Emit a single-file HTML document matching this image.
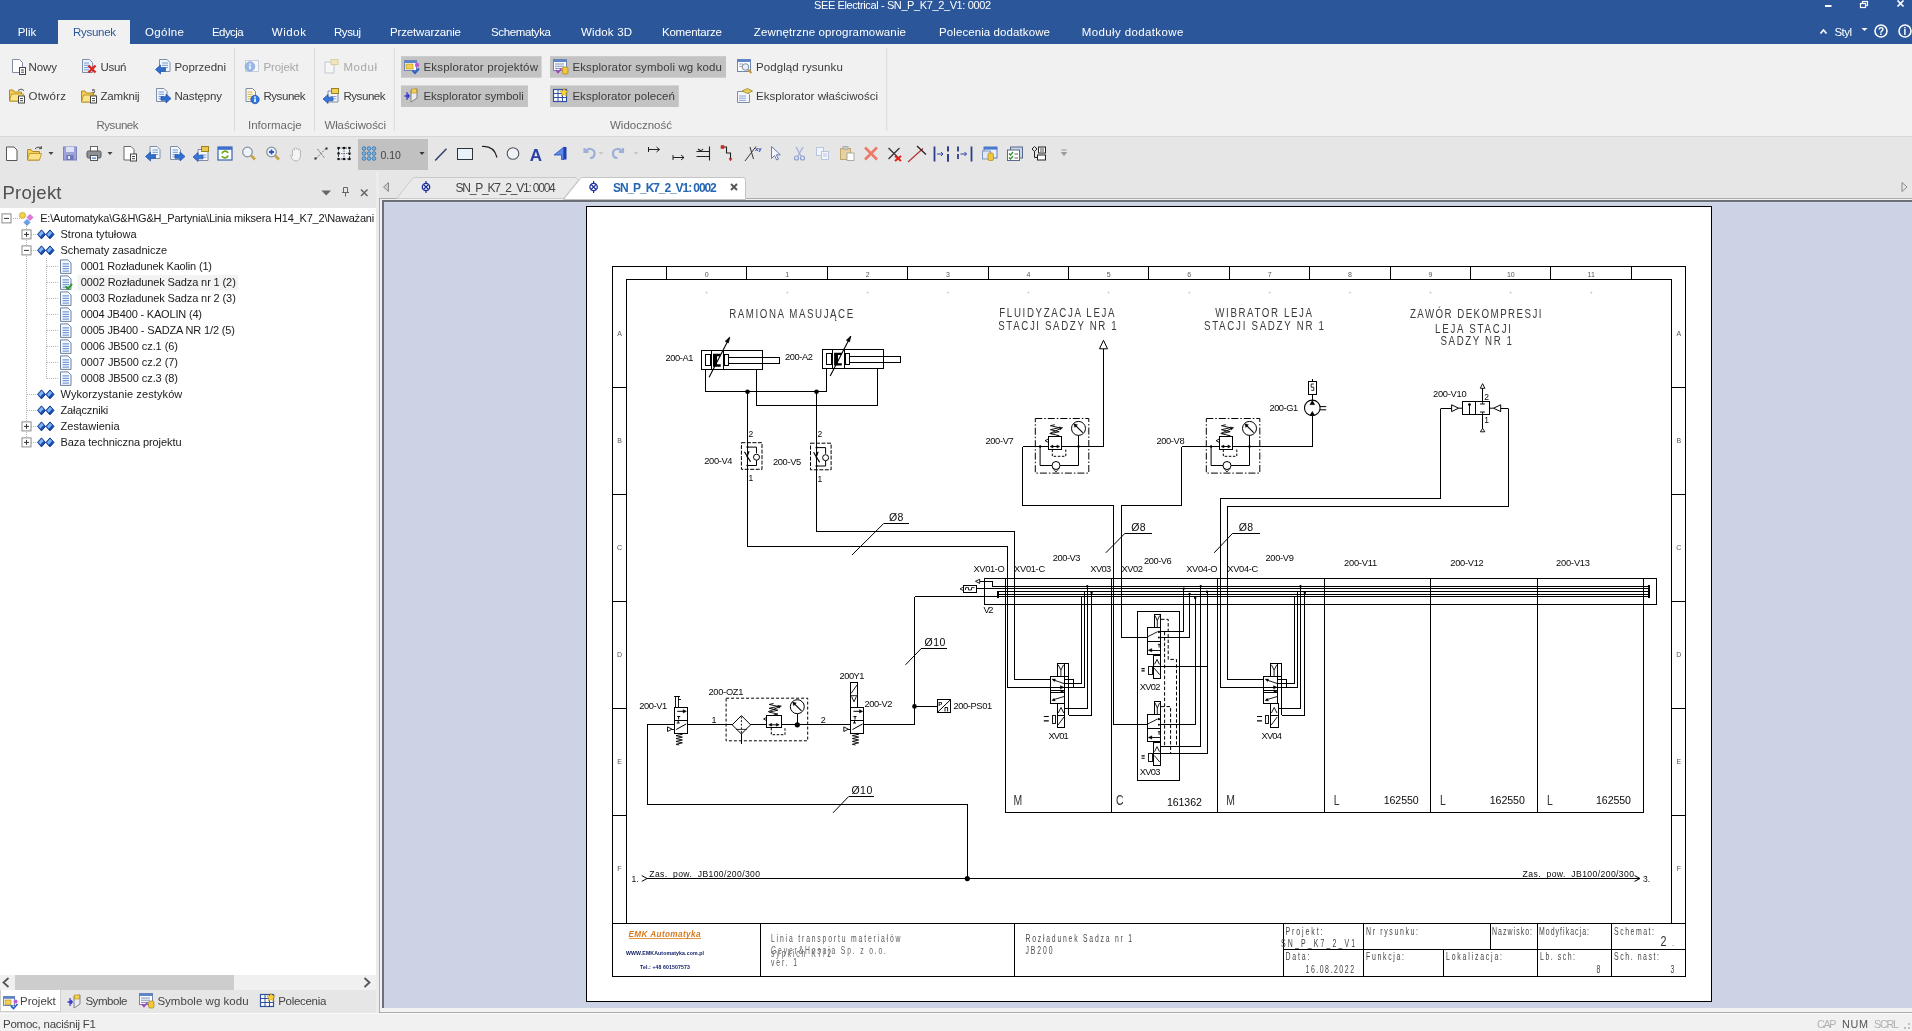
<!DOCTYPE html>
<html lang="pl"><head><meta charset="utf-8"><title>SEE Electrical - SN_P_K7_2_V1: 0002</title>
<style>
html,body{margin:0;padding:0;}
body{width:1912px;height:1031px;overflow:hidden;position:relative;background:#f0f0f0;font-family:"Liberation Sans",sans-serif;}
div{position:absolute;box-sizing:border-box;}
#titlebar{left:0;top:0;width:1912px;height:44px;background:#2B579A;}
#tab-active{left:58px;top:20px;width:72px;height:25px;background:#f1f1f1;}
#ribbon{left:0;top:44px;width:1912px;height:93px;background:#f1f1f1;border-bottom:1px solid #d8d8d8;}
#toolbar{left:0;top:137px;width:1912px;height:75px;background:#e6e6e6;}
#gridcombo{left:358px;top:139px;width:70px;height:31px;background:#c1c1c1;}
#panel{left:0;top:208px;width:376px;height:767px;background:#ffffff;}
#hscroll{left:0;top:975px;width:376px;height:15px;background:#f0f0f0;}
#hthumb{left:15px;top:975px;width:219px;height:15px;background:#cdcdcd;}
#ptabs{left:0;top:990px;width:376px;height:23px;background:#e6e6e6;}
#ptab-active{left:0;top:990px;width:61px;height:22px;background:#ffffff;border:1px solid #d0d0d0;border-top:none;}
#splitter{left:376px;top:172px;width:3px;height:841px;background:#ececec;}
#docouter{left:379px;top:198px;width:1533px;height:815px;background:#f2f2f2;border-top:1px solid #ababab;border-left:1px solid #ababab;border-bottom:1px solid #ababab;}
#docdark{left:382px;top:200px;width:1530px;height:808px;background:#6b7079;}
#docarea{left:384px;top:202px;width:1528px;height:806px;background:#ccd3e4;border-top:1px solid #d4d9e8;}
#paper{left:586px;top:206px;width:1126px;height:796px;background:#ffffff;border:1px solid #000;}
#status{left:0;top:1013px;width:1912px;height:18px;background:#f1f1f1;border-top:1px solid #fafafa;}
svg{position:absolute;left:0;top:0;will-change:transform;}
text{font-family:"Liberation Sans",sans-serif;white-space:pre;}
</style></head><body>
<div id="titlebar"></div><div id="tab-active"></div>
<div id="ribbon"></div>
<div id="toolbar"></div><div id="gridcombo"></div>
<div id="panel"></div><div id="hscroll"></div><div id="hthumb"></div><div id="ptabs"></div><div id="ptab-active"></div>
<div id="splitter"></div>
<div id="docouter"></div><div id="docdark"></div><div id="docarea"></div>
<div id="paper"></div>
<div id="status"></div>
<svg id="schematic" width="1912" height="1031" viewBox="0 0 1912 1031">
<g shape-rendering="crispEdges">
<rect x="612.5" y="266.5" width="1073" height="710" fill="none" stroke="#000" stroke-width="1"  shape-rendering="crispEdges"/>
<path d="M626.5 923.5 L626.5 279.5 L1671.5 279.5 L1671.5 923.5" stroke="#000" stroke-width="1" fill="none" />
<line x1="612.5" y1="923.5" x2="1685.5" y2="923.5" stroke="#000" stroke-width="1"  shape-rendering="crispEdges"/>
<line x1="666.5" y1="266.5" x2="666.5" y2="279.5" stroke="#000" stroke-width="1"  shape-rendering="crispEdges"/>
<line x1="746.5" y1="266.5" x2="746.5" y2="279.5" stroke="#000" stroke-width="1"  shape-rendering="crispEdges"/>
<line x1="827.5" y1="266.5" x2="827.5" y2="279.5" stroke="#000" stroke-width="1"  shape-rendering="crispEdges"/>
<line x1="907.5" y1="266.5" x2="907.5" y2="279.5" stroke="#000" stroke-width="1"  shape-rendering="crispEdges"/>
<line x1="988.5" y1="266.5" x2="988.5" y2="279.5" stroke="#000" stroke-width="1"  shape-rendering="crispEdges"/>
<line x1="1068.5" y1="266.5" x2="1068.5" y2="279.5" stroke="#000" stroke-width="1"  shape-rendering="crispEdges"/>
<line x1="1148.5" y1="266.5" x2="1148.5" y2="279.5" stroke="#000" stroke-width="1"  shape-rendering="crispEdges"/>
<line x1="1229.5" y1="266.5" x2="1229.5" y2="279.5" stroke="#000" stroke-width="1"  shape-rendering="crispEdges"/>
<line x1="1309.5" y1="266.5" x2="1309.5" y2="279.5" stroke="#000" stroke-width="1"  shape-rendering="crispEdges"/>
<line x1="1390.5" y1="266.5" x2="1390.5" y2="279.5" stroke="#000" stroke-width="1"  shape-rendering="crispEdges"/>
<line x1="1470.5" y1="266.5" x2="1470.5" y2="279.5" stroke="#000" stroke-width="1"  shape-rendering="crispEdges"/>
<line x1="1550.5" y1="266.5" x2="1550.5" y2="279.5" stroke="#000" stroke-width="1"  shape-rendering="crispEdges"/>
<line x1="1631.5" y1="266.5" x2="1631.5" y2="279.5" stroke="#000" stroke-width="1"  shape-rendering="crispEdges"/>
<line x1="612.5" y1="387.5" x2="626.5" y2="387.5" stroke="#000" stroke-width="1"  shape-rendering="crispEdges"/>
<line x1="1671.5" y1="387.5" x2="1685.5" y2="387.5" stroke="#000" stroke-width="1"  shape-rendering="crispEdges"/>
<line x1="612.5" y1="494.5" x2="626.5" y2="494.5" stroke="#000" stroke-width="1"  shape-rendering="crispEdges"/>
<line x1="1671.5" y1="494.5" x2="1685.5" y2="494.5" stroke="#000" stroke-width="1"  shape-rendering="crispEdges"/>
<line x1="612.5" y1="601.5" x2="626.5" y2="601.5" stroke="#000" stroke-width="1"  shape-rendering="crispEdges"/>
<line x1="1671.5" y1="601.5" x2="1685.5" y2="601.5" stroke="#000" stroke-width="1"  shape-rendering="crispEdges"/>
<line x1="612.5" y1="708.5" x2="626.5" y2="708.5" stroke="#000" stroke-width="1"  shape-rendering="crispEdges"/>
<line x1="1671.5" y1="708.5" x2="1685.5" y2="708.5" stroke="#000" stroke-width="1"  shape-rendering="crispEdges"/>
<line x1="612.5" y1="815.5" x2="626.5" y2="815.5" stroke="#000" stroke-width="1"  shape-rendering="crispEdges"/>
<line x1="1671.5" y1="815.5" x2="1685.5" y2="815.5" stroke="#000" stroke-width="1"  shape-rendering="crispEdges"/>
<line x1="760.5" y1="923.5" x2="760.5" y2="976.5" stroke="#000" stroke-width="1"  shape-rendering="crispEdges"/>
<line x1="1014.5" y1="923.5" x2="1014.5" y2="976.5" stroke="#000" stroke-width="1"  shape-rendering="crispEdges"/>
<line x1="1283.5" y1="923.5" x2="1283.5" y2="976.5" stroke="#000" stroke-width="1"  shape-rendering="crispEdges"/>
<line x1="1363.5" y1="923.5" x2="1363.5" y2="976.5" stroke="#000" stroke-width="1"  shape-rendering="crispEdges"/>
<line x1="1537.5" y1="923.5" x2="1537.5" y2="976.5" stroke="#000" stroke-width="1"  shape-rendering="crispEdges"/>
<line x1="1611.5" y1="923.5" x2="1611.5" y2="976.5" stroke="#000" stroke-width="1"  shape-rendering="crispEdges"/>
<line x1="1490.5" y1="923.5" x2="1490.5" y2="949.5" stroke="#000" stroke-width="1"  shape-rendering="crispEdges"/>
<line x1="1443.5" y1="949.5" x2="1443.5" y2="976.5" stroke="#000" stroke-width="1"  shape-rendering="crispEdges"/>
<line x1="1283.5" y1="949.5" x2="1685.5" y2="949.5" stroke="#000" stroke-width="1"  shape-rendering="crispEdges"/>
</g>
<text x="706.8" y="276.5" font-size="7" fill="#555" text-anchor="middle" >0</text>
<text x="706.8" y="294" font-size="5" fill="#bbb" text-anchor="middle" >+</text>
<text x="787.2" y="276.5" font-size="7" fill="#555" text-anchor="middle" >1</text>
<text x="787.2" y="294" font-size="5" fill="#bbb" text-anchor="middle" >+</text>
<text x="867.6" y="276.5" font-size="7" fill="#555" text-anchor="middle" >2</text>
<text x="867.6" y="294" font-size="5" fill="#bbb" text-anchor="middle" >+</text>
<text x="948" y="276.5" font-size="7" fill="#555" text-anchor="middle" >3</text>
<text x="948" y="294" font-size="5" fill="#bbb" text-anchor="middle" >+</text>
<text x="1028.4" y="276.5" font-size="7" fill="#555" text-anchor="middle" >4</text>
<text x="1028.4" y="294" font-size="5" fill="#bbb" text-anchor="middle" >+</text>
<text x="1108.8" y="276.5" font-size="7" fill="#555" text-anchor="middle" >5</text>
<text x="1108.8" y="294" font-size="5" fill="#bbb" text-anchor="middle" >+</text>
<text x="1189.2" y="276.5" font-size="7" fill="#555" text-anchor="middle" >6</text>
<text x="1189.2" y="294" font-size="5" fill="#bbb" text-anchor="middle" >+</text>
<text x="1269.6" y="276.5" font-size="7" fill="#555" text-anchor="middle" >7</text>
<text x="1269.6" y="294" font-size="5" fill="#bbb" text-anchor="middle" >+</text>
<text x="1350" y="276.5" font-size="7" fill="#555" text-anchor="middle" >8</text>
<text x="1350" y="294" font-size="5" fill="#bbb" text-anchor="middle" >+</text>
<text x="1430.4" y="276.5" font-size="7" fill="#555" text-anchor="middle" >9</text>
<text x="1430.4" y="294" font-size="5" fill="#bbb" text-anchor="middle" >+</text>
<text x="1510.8" y="276.5" font-size="7" fill="#555" text-anchor="middle" >10</text>
<text x="1510.8" y="294" font-size="5" fill="#bbb" text-anchor="middle" >+</text>
<text x="1591.2" y="276.5" font-size="7" fill="#555" text-anchor="middle" >11</text>
<text x="1591.2" y="294" font-size="5" fill="#bbb" text-anchor="middle" >+</text>
<text x="619.5" y="335.8" font-size="7" fill="#555" text-anchor="middle" >A</text>
<text x="1678.8" y="335.8" font-size="7" fill="#555" text-anchor="middle" >A</text>
<text x="619.5" y="442.8" font-size="7" fill="#555" text-anchor="middle" >B</text>
<text x="1678.8" y="442.8" font-size="7" fill="#555" text-anchor="middle" >B</text>
<text x="619.5" y="549.8" font-size="7" fill="#555" text-anchor="middle" >C</text>
<text x="1678.8" y="549.8" font-size="7" fill="#555" text-anchor="middle" >C</text>
<text x="619.5" y="656.8" font-size="7" fill="#555" text-anchor="middle" >D</text>
<text x="1678.8" y="656.8" font-size="7" fill="#555" text-anchor="middle" >D</text>
<text x="619.5" y="763.8" font-size="7" fill="#555" text-anchor="middle" >E</text>
<text x="1678.8" y="763.8" font-size="7" fill="#555" text-anchor="middle" >E</text>
<text x="619.5" y="870.8" font-size="7" fill="#555" text-anchor="middle" >F</text>
<text x="1678.8" y="870.8" font-size="7" fill="#555" text-anchor="middle" >F</text>
<text transform="translate(1285.5 934.8) scale(0.62 1)" font-size="11.2" fill="#444" textLength="59.68" lengthAdjust="spacing" >Projekt:</text>
<text transform="translate(1281 946.5) scale(0.62 1)" font-size="11.2" fill="#444" textLength="119.35" lengthAdjust="spacing" >SN_P_K7_2_V1</text>
<text transform="translate(1285.5 960.3) scale(0.62 1)" font-size="11.2" fill="#444" textLength="38.71" lengthAdjust="spacing" >Data:</text>
<text transform="translate(1305.5 973.2) scale(0.62 1)" font-size="11.2" fill="#444" textLength="78.23" lengthAdjust="spacing" >16.08.2022</text>
<text transform="translate(1366 934.8) scale(0.62 1)" font-size="11.2" fill="#444" textLength="83.87" lengthAdjust="spacing" >Nr rysunku:</text>
<text transform="translate(1492 934.8) scale(0.62 1)" font-size="11.2" fill="#444" textLength="64.52" lengthAdjust="spacing" >Nazwisko:</text>
<text transform="translate(1539 934.8) scale(0.62 1)" font-size="11.2" fill="#444" textLength="80.65" lengthAdjust="spacing" >Modyfikacja:</text>
<text transform="translate(1614 934.8) scale(0.62 1)" font-size="11.2" fill="#444" textLength="64.52" lengthAdjust="spacing" >Schemat:</text>
<text transform="translate(1660.5 945.5) scale(0.72 1)" font-size="15" fill="#333" textLength="11.81" lengthAdjust="spacing" >2</text>
<text x="1672" y="946" font-size="8" fill="#3a3a3a" >.</text>
<text transform="translate(1366 960.3) scale(0.62 1)" font-size="11.2" fill="#444" textLength="61.29" lengthAdjust="spacing" >Funkcja:</text>
<text transform="translate(1446 960.3) scale(0.62 1)" font-size="11.2" fill="#444" textLength="90.32" lengthAdjust="spacing" >Lokalizacja:</text>
<text transform="translate(1540 960.3) scale(0.62 1)" font-size="11.2" fill="#444" textLength="56.45" lengthAdjust="spacing" >Lb. sch:</text>
<text transform="translate(1596.5 973.2) scale(0.62 1)" font-size="11.2" fill="#444" textLength="7.26" lengthAdjust="spacing" >8</text>
<text transform="translate(1614 960.3) scale(0.62 1)" font-size="11.2" fill="#444" textLength="72.58" lengthAdjust="spacing" >Sch. nast:</text>
<text transform="translate(1670.5 973.2) scale(0.62 1)" font-size="11.2" fill="#444" textLength="7.26" lengthAdjust="spacing" >3</text>
<text transform="translate(1025.5 942) scale(0.68 1)" font-size="10" fill="#4a4a4a" textLength="156.62" lengthAdjust="spacing" >Rozładunek Sadza nr 1</text>
<text transform="translate(1025.5 953.5) scale(0.68 1)" font-size="10" fill="#4a4a4a" textLength="39.71" lengthAdjust="spacing" >JB200</text>
<text transform="translate(771 942) scale(0.68 1)" font-size="10" fill="#555" textLength="190.44" lengthAdjust="spacing" >Linia transportu materiałów</text>
<text transform="translate(771 953.5) scale(0.68 1)" font-size="10" fill="#666" textLength="169.12" lengthAdjust="spacing" >Geyer&amp;Hosaja Sp. z o.o.</text>
<text transform="translate(771 957) scale(0.68 1)" font-size="10" fill="#666" textLength="88.24" lengthAdjust="spacing" >sypkich K7/2</text>
<text transform="translate(771 965.6) scale(0.68 1)" font-size="10" fill="#555" textLength="38.24" lengthAdjust="spacing" >ver. 1</text>
<text x="628.5" y="937" font-size="8.2" fill="#d87a1c" font-weight="bold" font-style="italic" textLength="72" lengthAdjust="spacing" >EMK Automatyka</text>
<line x1="628.5" y1="938.5" x2="701" y2="938.5" stroke="#d87a1c" stroke-width="0.8"  shape-rendering="crispEdges"/>
<text x="626" y="954.5" font-size="5.2" fill="#10206a" font-weight="bold" textLength="78" lengthAdjust="spacing" >WWW.EMKAutomatyka.com.pl</text>
<text x="640" y="968.5" font-size="5.2" fill="#10206a" font-weight="bold" textLength="50" lengthAdjust="spacing" >Tel.: +48 601507573</text>
<text transform="translate(729.2 317.6) scale(0.72 1)" font-size="13.5" fill="#3a3a3a" textLength="172.22" lengthAdjust="spacing" >RAMIONA MASUJĄCE</text>
<text transform="translate(999.3 316.9) scale(0.72 1)" font-size="13.5" fill="#3a3a3a" textLength="160" lengthAdjust="spacing" >FLUIDYZACJA LEJA</text>
<text transform="translate(998.2 330) scale(0.72 1)" font-size="13.5" fill="#3a3a3a" textLength="164.58" lengthAdjust="spacing" >STACJI SADZY NR 1</text>
<text transform="translate(1215.3 316.9) scale(0.72 1)" font-size="13.5" fill="#3a3a3a" textLength="134.31" lengthAdjust="spacing" >WIBRATOR LEJA</text>
<text transform="translate(1204 330) scale(0.72 1)" font-size="13.5" fill="#3a3a3a" textLength="166.67" lengthAdjust="spacing" >STACJI SADZY NR 1</text>
<text transform="translate(1409.9 318.4) scale(0.72 1)" font-size="13.5" fill="#3a3a3a" textLength="182.78" lengthAdjust="spacing" >ZAWÓR DEKOMPRESJI</text>
<text transform="translate(1435 332.6) scale(0.72 1)" font-size="13.5" fill="#3a3a3a" textLength="105.56" lengthAdjust="spacing" >LEJA STACJI</text>
<text transform="translate(1440.5 345.2) scale(0.72 1)" font-size="13.5" fill="#3a3a3a" textLength="99.31" lengthAdjust="spacing" >SADZY NR 1</text>
<rect x="701.5" y="350.4" width="61.2" height="18.8" fill="none" stroke="#000" stroke-width="1"  shape-rendering="crispEdges"/>
<rect x="728.8" y="357.2" width="50.8" height="6.4" fill="none" stroke="#000" stroke-width="1"  shape-rendering="crispEdges"/>
<rect x="705.4" y="354.3" width="4.8" height="11.3" fill="none" stroke="#000" stroke-width="1"  shape-rendering="crispEdges"/>
<line x1="711.3" y1="350.4" x2="711.3" y2="369.2" stroke="#000" stroke-width="1"  shape-rendering="crispEdges"/>
<line x1="723.3" y1="350.4" x2="723.3" y2="369.2" stroke="#000" stroke-width="1"  shape-rendering="crispEdges"/>
<rect x="724.4" y="354.3" width="4.4" height="11.3" fill="#fff" stroke="#000" stroke-width="1"  shape-rendering="crispEdges"/>
<path d="M720.7 355 h-6.5 v10.5 h6.5" stroke="#000" stroke-width="2.4" fill="none" />
<line x1="715" y1="355" x2="715" y2="365.5" stroke="#000" stroke-width="3"  shape-rendering="crispEdges"/>
<line x1="709.1" y1="377.2" x2="729.6" y2="337.4" stroke="#000" stroke-width="1.1" />
<path d="M729.8 337.1 l-4.6 4.2 l3.2 1.7 z" stroke="#000" stroke-width="0.6" fill="#000" />
<text x="665.5" y="360.8" font-size="9.3" fill="#0a0a0a" textLength="28" lengthAdjust="spacing" >200-A1</text>
<rect x="822.6" y="349.3" width="61.2" height="18.8" fill="none" stroke="#000" stroke-width="1"  shape-rendering="crispEdges"/>
<rect x="849.9" y="356.1" width="50.8" height="6.4" fill="none" stroke="#000" stroke-width="1"  shape-rendering="crispEdges"/>
<rect x="826.5" y="353.2" width="4.8" height="11.3" fill="none" stroke="#000" stroke-width="1"  shape-rendering="crispEdges"/>
<line x1="832.4" y1="349.3" x2="832.4" y2="368.1" stroke="#000" stroke-width="1"  shape-rendering="crispEdges"/>
<line x1="844.4" y1="349.3" x2="844.4" y2="368.1" stroke="#000" stroke-width="1"  shape-rendering="crispEdges"/>
<rect x="845.5" y="353.2" width="4.4" height="11.3" fill="#fff" stroke="#000" stroke-width="1"  shape-rendering="crispEdges"/>
<path d="M841.8 353.9 h-6.5 v10.5 h6.5" stroke="#000" stroke-width="2.4" fill="none" />
<line x1="836.1" y1="353.9" x2="836.1" y2="364.4" stroke="#000" stroke-width="3"  shape-rendering="crispEdges"/>
<line x1="830.2" y1="376.1" x2="850.7" y2="336.3" stroke="#000" stroke-width="1.1" />
<path d="M850.9 336 l-4.6 4.2 l3.2 1.7 z" stroke="#000" stroke-width="0.6" fill="#000" />
<text x="785" y="359.7" font-size="9.3" fill="#0a0a0a" textLength="28" lengthAdjust="spacing" >200-A2</text>
<path d="M705.5 369.2 V391.5 H826.5 V368.1 M756.5 369.2 V405.5 H877.8 V368.1 M747.5 391.5 V546.5 H1007.5 V687.5 H1062.5 M816.5 391.5 V531.5 H1014.5 V679.5 H1050.5" stroke="#000" stroke-width="1" fill="none" shape-rendering="crispEdges"/>
<circle cx="747.5" cy="391.8" r="2.3" fill="#000" />
<circle cx="816.5" cy="391.8" r="2.3" fill="#000" />
<rect x="741.4" y="442.7" width="20.6" height="26.6" fill="none" stroke="#000" stroke-width="1" stroke-dasharray="4 1.5"/>
<path d="M747.5 447.1 h9 v6.2 M756.5 459.3 v6.2 h-9" stroke="#000" stroke-width="1" fill="none" />
<circle cx="756.5" cy="457.2" r="3" fill="#fff" stroke="#000" stroke-width="1" />
<path d="M744.5 451.7 l6 10 M749 451.2 l-2.2 6" stroke="#000" stroke-width="1.2" fill="none" />
<circle cx="747.5" cy="447.1" r="1.1" fill="#000" />
<circle cx="747.5" cy="465.5" r="1.1" fill="#000" />
<text x="748.5" y="436.7" font-size="8.5" fill="#0a0a0a" >2</text>
<text x="748.5" y="481.2" font-size="8.5" fill="#0a0a0a" >1</text>
<text x="704.3" y="464.2" font-size="9.3" fill="#0a0a0a" textLength="28.2" lengthAdjust="spacing" >200-V4</text>
<rect x="810.5" y="443.2" width="20.6" height="26.6" fill="none" stroke="#000" stroke-width="1" stroke-dasharray="4 1.5"/>
<path d="M816.6 447.6 h9 v6.2 M825.6 459.8 v6.2 h-9" stroke="#000" stroke-width="1" fill="none" />
<circle cx="825.6" cy="457.7" r="3" fill="#fff" stroke="#000" stroke-width="1" />
<path d="M813.6 452.2 l6 10 M818.1 451.7 l-2.2 6" stroke="#000" stroke-width="1.2" fill="none" />
<circle cx="816.6" cy="447.6" r="1.1" fill="#000" />
<circle cx="816.6" cy="466" r="1.1" fill="#000" />
<text x="817.6" y="437.2" font-size="8.5" fill="#0a0a0a" >2</text>
<text x="817.6" y="481.7" font-size="8.5" fill="#0a0a0a" >1</text>
<text x="773" y="464.7" font-size="9.3" fill="#0a0a0a" textLength="28.2" lengthAdjust="spacing" >200-V5</text>
<text x="889" y="521.3" font-size="10.5" fill="#0a0a0a" textLength="14.3" lengthAdjust="spacing" >Ø8</text>
<line x1="883.7" y1="523.5" x2="908.8" y2="523.5" stroke="#000" stroke-width="1"  shape-rendering="crispEdges"/>
<line x1="883.7" y1="523.5" x2="852" y2="555" stroke="#000" stroke-width="1" />
<text x="1131.3" y="530.9" font-size="10.5" fill="#0a0a0a" textLength="14.3" lengthAdjust="spacing" >Ø8</text>
<line x1="1125.2" y1="533.1" x2="1151.5" y2="533.1" stroke="#000" stroke-width="1"  shape-rendering="crispEdges"/>
<line x1="1125.2" y1="533.1" x2="1105.8" y2="552.8" stroke="#000" stroke-width="1" />
<text x="1238.7" y="530.9" font-size="10.5" fill="#0a0a0a" textLength="14.3" lengthAdjust="spacing" >Ø8</text>
<line x1="1232.8" y1="533.1" x2="1259.6" y2="533.1" stroke="#000" stroke-width="1"  shape-rendering="crispEdges"/>
<line x1="1232.8" y1="533.1" x2="1214.2" y2="552.8" stroke="#000" stroke-width="1" />
<text x="924.5" y="646.2" font-size="10.5" fill="#0a0a0a" textLength="20.9" lengthAdjust="spacing" >Ø10</text>
<line x1="921.4" y1="648.4" x2="947" y2="648.4" stroke="#000" stroke-width="1"  shape-rendering="crispEdges"/>
<line x1="921.4" y1="648.4" x2="905.5" y2="664.8" stroke="#000" stroke-width="1" />
<text x="851.4" y="794.2" font-size="10.5" fill="#0a0a0a" textLength="20.9" lengthAdjust="spacing" >Ø10</text>
<line x1="848.8" y1="796.4" x2="873.9" y2="796.4" stroke="#000" stroke-width="1"  shape-rendering="crispEdges"/>
<line x1="848.8" y1="796.4" x2="833" y2="812.8" stroke="#000" stroke-width="1" />
<path d="M914.5 596.5 H984 M914.5 596.5 V724.5 H647.5 V804.5 H967.5 V878.5 M914.5 706.5 H937 M647 878.5 H1640" stroke="#000" stroke-width="1" fill="none" shape-rendering="crispEdges"/>
<circle cx="914.5" cy="706.4" r="2.3" fill="#000" />
<circle cx="967.3" cy="878.6" r="2.6" fill="#000" />
<text x="631.5" y="881.5" font-size="8.5" fill="#0a0a0a" >1.</text>
<path d="M641.8 875.6 L647 878.5 L641.8 881.4" stroke="#000" stroke-width="1" fill="none" />
<text x="649.3" y="877" font-size="8.6" fill="#0a0a0a" textLength="110.7" lengthAdjust="spacing" >Zas.  pow.  JB100/200/300</text>
<text x="1522.6" y="877" font-size="8.6" fill="#0a0a0a" textLength="111.4" lengthAdjust="spacing" >Zas.  pow.  JB100/200/300</text>
<path d="M1634.5 875.6 L1640 878.5 L1634.5 881.4" stroke="#000" stroke-width="1" fill="none" />
<text x="1643" y="882" font-size="8.5" fill="#0a0a0a" >3.</text>
<text x="639.3" y="709" font-size="9.3" fill="#0a0a0a" textLength="27.9" lengthAdjust="spacing" >200-V1</text>
<rect x="675.2" y="696" width="3" height="11" fill="#fff" stroke="#000" stroke-width="0.9"  shape-rendering="crispEdges"/>
<line x1="673.8" y1="696" x2="679.8" y2="696" stroke="#000" stroke-width="0.9"  shape-rendering="crispEdges"/>
<line x1="678.2" y1="699.5" x2="681" y2="699.5" stroke="#000" stroke-width="0.9"  shape-rendering="crispEdges"/>
<rect x="674.2" y="707" width="13.4" height="26.1" fill="#fff" stroke="#000" stroke-width="1"  shape-rendering="crispEdges"/>
<line x1="674.2" y1="720" x2="687.6" y2="720" stroke="#000" stroke-width="1"  shape-rendering="crispEdges"/>
<path d="M677.2 711.3 h7.5" stroke="#000" stroke-width="1" fill="none" />
<path d="M686.4 711.3 l-3.2 -1.6 v3.2 z" stroke="#000" stroke-width="0.5" fill="#000" />
<path d="M678.7 716.5 v3 M677.2 716.5 h3" stroke="#000" stroke-width="1" fill="none" />
<path d="M676.2 729.5 L686.2 724" stroke="#000" stroke-width="1" fill="none" />
<path d="M676.7 723 h3 M678.2 723 v-3" stroke="#000" stroke-width="1" fill="none" />
<path d="M679.2 733.5 L682.4 734.22 L676 735.66 L682.4 737.09 L676 738.53 L682.4 739.97 L676 741.41 L682.4 742.84 L676 744.28 L679.2 745" stroke="#000" stroke-width="0.9" fill="none" />
<path d="M672 729.2 l-4.5 -2.3 v4.6 z" stroke="#000" stroke-width="0.9" fill="#fff" />
<line x1="672" y1="729.2" x2="674.2" y2="729.2" stroke="#000" stroke-width="0.9"  shape-rendering="crispEdges"/>
<text x="711.5" y="723" font-size="9" fill="#0a0a0a" >1</text>
<text x="820.8" y="723" font-size="9" fill="#0a0a0a" >2</text>
<text x="708.5" y="695" font-size="9.3" fill="#0a0a0a" textLength="34.9" lengthAdjust="spacing" >200-OZ1</text>
<rect x="726.1" y="698.2" width="81.6" height="42.6" fill="none" stroke="#000" stroke-width="1" stroke-dasharray="3 2"/>
<path d="M741.4 715.6 l9.2 9.2 l-9.2 9.2 l-9.2 -9.2 z" stroke="#000" stroke-width="1" fill="#fff" />
<path d="M741.4 716.5 v17" stroke="#000" stroke-width="0.9" stroke-dasharray="2 1.6" fill="none"/>
<path d="M736 729.4 h10.8" stroke="#000" stroke-width="0.8" fill="none" />
<line x1="741.4" y1="734" x2="741.4" y2="743.6" stroke="#000" stroke-width="1"  shape-rendering="crispEdges"/>
<line x1="750.6" y1="724.8" x2="766.9" y2="724.8" stroke="#000" stroke-width="1"  shape-rendering="crispEdges"/>
<rect x="766.9" y="715" width="14.2" height="12.8" fill="#fff" stroke="#000" stroke-width="1"  shape-rendering="crispEdges"/>
<path d="M769.4 724.8 h9" stroke="#000" stroke-width="1" fill="none" />
<path d="M768.7 724.8 l3 -1.5 v3 z M779.3 724.8 l-3 -1.5 v3 z" stroke="#000" stroke-width="0.4" fill="#000" />
<path d="M766.9 717.2 l-3.3 1.8 l3.3 1.8" stroke="#000" stroke-width="0.9" fill="none" />
<path d="M773.5 715 L777.9 714.04 L769.1 712.12 L777.9 710.21 L769.1 708.29 L777.9 706.38 L769.1 704.46 L773.5 703.5" stroke="#000" stroke-width="0.9" fill="none" />
<line x1="768.1" y1="711.8" x2="779.7" y2="706.7" stroke="#000" stroke-width="0.9" />
<path d="M781.5 705.9 l-3.8 -0.6 l1.2 3 z" stroke="#000" stroke-width="0.4" fill="#000" />
<path d="M771.3 727.8 v6.9 h13.7 v-6.9" fill="none" stroke="#000" stroke-width="1" stroke-dasharray="2.5 1.6"/>
<circle cx="797.3" cy="706.7" r="7" fill="#fff" stroke="#000" stroke-width="1" />
<line x1="801.5" y1="710.9" x2="793.7" y2="703.1" stroke="#000" stroke-width="1.1" />
<path d="M792.7 702.1 l3.6 0.9 l-2.7 2.7 z" stroke="#000" stroke-width="0.4" fill="#000" />
<line x1="797.3" y1="713.7" x2="797.3" y2="724.8" stroke="#000" stroke-width="1"  shape-rendering="crispEdges"/>
<circle cx="797.3" cy="724.8" r="2.6" fill="#000" />
<text x="839.6" y="679.2" font-size="9.3" fill="#0a0a0a" textLength="24.9" lengthAdjust="spacing" >200Y1</text>
<rect x="850.5" y="682.5" width="7" height="24.5" fill="#fff" stroke="#000" stroke-width="1"  shape-rendering="crispEdges"/>
<path d="M851 693.5 L857 685 M850.5 695.7 H857.5 M851.6 696.4 l2.4 5.4 l2.4 -5.4" stroke="#000" stroke-width="0.9" fill="none" />
<rect x="850.5" y="707" width="13.4" height="26.1" fill="#fff" stroke="#000" stroke-width="1"  shape-rendering="crispEdges"/>
<line x1="850.5" y1="720" x2="863.9" y2="720" stroke="#000" stroke-width="1"  shape-rendering="crispEdges"/>
<path d="M853.5 711.3 h7.5" stroke="#000" stroke-width="1" fill="none" />
<path d="M862.7 711.3 l-3.2 -1.6 v3.2 z" stroke="#000" stroke-width="0.5" fill="#000" />
<path d="M855 716.5 v3 M853.5 716.5 h3" stroke="#000" stroke-width="1" fill="none" />
<path d="M852.5 729.5 L862.5 724" stroke="#000" stroke-width="1" fill="none" />
<path d="M853 723 h3 M854.5 723 v-3" stroke="#000" stroke-width="1" fill="none" />
<path d="M855.5 733.5 L858.7 734.22 L852.3 735.66 L858.7 737.09 L852.3 738.53 L858.7 739.97 L852.3 741.41 L858.7 742.84 L852.3 744.28 L855.5 745" stroke="#000" stroke-width="0.9" fill="none" />
<path d="M848.3 729.2 l-4.5 -2.3 v4.6 z" stroke="#000" stroke-width="0.9" fill="#fff" />
<line x1="848.3" y1="729.2" x2="850.5" y2="729.2" stroke="#000" stroke-width="0.9"  shape-rendering="crispEdges"/>
<text x="864.5" y="707" font-size="9.3" fill="#0a0a0a" textLength="27.9" lengthAdjust="spacing" >200-V2</text>
<rect x="937.2" y="699.5" width="13.5" height="13.1" fill="#fff" stroke="#000" stroke-width="1.2"  shape-rendering="crispEdges"/>
<line x1="937.2" y1="712.6" x2="950.7" y2="699.5" stroke="#000" stroke-width="1" />
<text x="938.3" y="706.2" font-size="6" fill="#000" font-weight="bold" >P</text>
<path d="M945 711.5 v-4 h2.6 v4" stroke="#000" stroke-width="0.9" fill="none" />
<text x="953.5" y="709" font-size="9.3" fill="#0a0a0a" textLength="38.6" lengthAdjust="spacing" >200-PS01</text>
<g shape-rendering="crispEdges">
<rect x="984.5" y="578.5" width="672" height="26" fill="none" stroke="#000" stroke-width="1"  shape-rendering="crispEdges"/>
<line x1="992.5" y1="586.5" x2="1649" y2="586.5" stroke="#000" stroke-width="1"  shape-rendering="crispEdges"/>
<line x1="976.5" y1="588.5" x2="1649" y2="588.5" stroke="#000" stroke-width="1"  shape-rendering="crispEdges"/>
<line x1="998" y1="591.5" x2="1649" y2="591.5" stroke="#000" stroke-width="1"  shape-rendering="crispEdges"/>
<line x1="998" y1="594.5" x2="1649" y2="594.5" stroke="#000" stroke-width="1"  shape-rendering="crispEdges"/>
<line x1="984.5" y1="596.5" x2="1649" y2="596.5" stroke="#000" stroke-width="1"  shape-rendering="crispEdges"/>
<line x1="1648.5" y1="585" x2="1648.5" y2="597.5" stroke="#000" stroke-width="2"  shape-rendering="crispEdges"/>
<line x1="1005.5" y1="578.5" x2="1005.5" y2="812.5" stroke="#000" stroke-width="1"  shape-rendering="crispEdges"/>
<line x1="1111.5" y1="578.5" x2="1111.5" y2="812.5" stroke="#000" stroke-width="1"  shape-rendering="crispEdges"/>
<line x1="1217.5" y1="578.5" x2="1217.5" y2="812.5" stroke="#000" stroke-width="1"  shape-rendering="crispEdges"/>
<line x1="1324.5" y1="578.5" x2="1324.5" y2="812.5" stroke="#000" stroke-width="1"  shape-rendering="crispEdges"/>
<line x1="1430.5" y1="578.5" x2="1430.5" y2="812.5" stroke="#000" stroke-width="1"  shape-rendering="crispEdges"/>
<line x1="1537.5" y1="578.5" x2="1537.5" y2="812.5" stroke="#000" stroke-width="1"  shape-rendering="crispEdges"/>
<line x1="1643.5" y1="578.5" x2="1643.5" y2="812.5" stroke="#000" stroke-width="1"  shape-rendering="crispEdges"/>
<line x1="1005.5" y1="812.5" x2="1643.5" y2="812.5" stroke="#000" stroke-width="1"  shape-rendering="crispEdges"/>
</g>
<path d="M992.5 581.5 V586.5" stroke="#000" stroke-width="1" fill="none" shape-rendering="crispEdges"/>
<line x1="998" y1="590.5" x2="998" y2="597.5" stroke="#000" stroke-width="2"  shape-rendering="crispEdges"/>
<path d="M975.5 581.3 l4.2 -2.1 v4.2 z" stroke="#000" stroke-width="0.9" fill="#fff" />
<line x1="979.7" y1="581.5" x2="992.5" y2="581.5" stroke="#000" stroke-width="1"  shape-rendering="crispEdges"/>
<rect x="963.5" y="585.5" width="13" height="7" fill="#fff" stroke="#000" stroke-width="1"  shape-rendering="crispEdges"/>
<path d="M960 588.9 l3.5 -1.8 v3.6 z M965.5 590 v-2.4 h3 v2.4 h3 v-2.4 h3" stroke="#000" stroke-width="0.8" fill="none" />
<text x="983.4" y="613.2" font-size="9.3" fill="#0a0a0a" textLength="10.1" lengthAdjust="spacing" >V2</text>
<text x="973.5" y="572.3" font-size="9.3" fill="#0a0a0a" textLength="31.2" lengthAdjust="spacing" >XV01-O</text>
<text x="1014.1" y="572.3" font-size="9.3" fill="#0a0a0a" textLength="31" lengthAdjust="spacing" >XV01-C</text>
<text x="1090.3" y="572.3" font-size="9.3" fill="#0a0a0a" textLength="20.9" lengthAdjust="spacing" >XV03</text>
<text x="1121.5" y="572.3" font-size="9.3" fill="#0a0a0a" textLength="21.4" lengthAdjust="spacing" >XV02</text>
<text x="1186.3" y="572.3" font-size="9.3" fill="#0a0a0a" textLength="31.2" lengthAdjust="spacing" >XV04-O</text>
<text x="1227.3" y="572.3" font-size="9.3" fill="#0a0a0a" textLength="31" lengthAdjust="spacing" >XV04-C</text>
<text x="1052.7" y="560.8" font-size="9.3" fill="#0a0a0a" textLength="27.8" lengthAdjust="spacing" >200-V3</text>
<text x="1144" y="564" font-size="9.3" fill="#0a0a0a" textLength="27.7" lengthAdjust="spacing" >200-V6</text>
<text x="1265.5" y="560.8" font-size="9.3" fill="#0a0a0a" textLength="28.4" lengthAdjust="spacing" >200-V9</text>
<text x="1344" y="565.8" font-size="9.3" fill="#0a0a0a" textLength="33.2" lengthAdjust="spacing" >200-V11</text>
<text x="1450.3" y="565.8" font-size="9.3" fill="#0a0a0a" textLength="33.4" lengthAdjust="spacing" >200-V12</text>
<text x="1556.1" y="565.8" font-size="9.3" fill="#0a0a0a" textLength="33.9" lengthAdjust="spacing" >200-V13</text>
<text transform="translate(1013.5 805) scale(0.72 1)" font-size="14.5" fill="#333" >M</text>
<text transform="translate(1116 805) scale(0.72 1)" font-size="14.5" fill="#333" >C</text>
<text transform="translate(1226.2 805) scale(0.72 1)" font-size="14.5" fill="#333" >M</text>
<text transform="translate(1333.8 805) scale(0.72 1)" font-size="14.5" fill="#333" >L</text>
<text transform="translate(1440 805) scale(0.72 1)" font-size="14.5" fill="#333" >L</text>
<text transform="translate(1547 805) scale(0.72 1)" font-size="14.5" fill="#333" >L</text>
<text x="1166.9" y="806.4" font-size="10.6" fill="#0a0a0a" textLength="35" lengthAdjust="spacing" >161362</text>
<text x="1383.7" y="804.3" font-size="10.6" fill="#0a0a0a" textLength="35" lengthAdjust="spacing" >162550</text>
<text x="1489.8" y="804.3" font-size="10.6" fill="#0a0a0a" textLength="35" lengthAdjust="spacing" >162550</text>
<text x="1596" y="804.3" font-size="10.6" fill="#0a0a0a" textLength="35" lengthAdjust="spacing" >162550</text>
<path d="M1022.5 446.5 V505.5 H1113.5 V724.5 H1195.5 V598 M1181.5 446.5 V505.5 H1121.5 V637.5 H1189.5 V594 M1022.5 446.5 H1103.5 V348.8 M1181.5 446.5 H1312.5 V415.5 M1220.5 687.5 V498.5 H1440.5 V408.5 M1227.5 679.5 V506.5 H1508.5 V408.5 M1220.5 687.5 H1274.5 M1227.5 679.5 H1263.5 M1064.5 683.5 H1081.5 V597 M1073.5 687.5 H1084.5 V591.5 M1064.8 708.5 H1087.5 V586.5 M1068.5 715.5 H1091.5 V592.5 M1277.5 683.5 H1294.5 V597 M1286.5 687.5 H1297.5 V591.5 M1278 708.5 H1300.5 V586.5 M1281.5 715.5 H1304.5 V592.5 M1160.5 631.5 H1183.5 V588.5 M1160.5 666.5 H1207.5 V591.5 M1160.5 746.5 H1200.5 V586.5 M1160.5 753.5 H1207.5 V666 " stroke="#000" stroke-width="1" fill="none" shape-rendering="crispEdges"/>
<circle cx="1087.3" cy="586.2" r="1.2" fill="#000" />
<circle cx="1300.5" cy="586.2" r="1.2" fill="#000" />
<circle cx="1200.7" cy="586.2" r="1.2" fill="#000" />
<circle cx="1207" cy="591.8" r="1.2" fill="#000" />
<circle cx="1091.6" cy="592.7" r="1.2" fill="#000" />
<circle cx="1304.8" cy="592.7" r="1.2" fill="#000" />
<circle cx="1189.6" cy="594" r="1.2" fill="#000" />
<circle cx="1195.2" cy="598" r="1.2" fill="#000" />
<circle cx="1183.7" cy="588.6" r="1.2" fill="#000" />
<path d="M1103.5 340.3 l4 8.5 h-8 z" stroke="#000" stroke-width="1" fill="#fff" />
<rect x="1137.5" y="611.5" width="42" height="169" fill="none" stroke="#000" stroke-width="1" shape-rendering="crispEdges" shape-rendering="crispEdges"/>
<path d="M1161 619.3 H1168.2 V659.4 H1176.5 V746.6 M1164.6 631.7 V746.6 M1161 706.6 H1170.6 V753.1" stroke="#000" stroke-width="1" fill="none" stroke-dasharray="3.5 2"/>
<rect x="1154.1" y="614.2" width="6.3" height="12.9" fill="#fff" stroke="#000" stroke-width="1"  shape-rendering="crispEdges"/>
<path d="M1155 615.6 l2.3 5 l2.3 -5 M1157.3 620.6 V627.1" stroke="#000" stroke-width="0.9" fill="none" />
<rect x="1147.3" y="627.4" width="12.9" height="26.9" fill="#fff" stroke="#000" stroke-width="1"  shape-rendering="crispEdges"/>
<line x1="1147.3" y1="641.4" x2="1160.2" y2="641.4" stroke="#000" stroke-width="1"  shape-rendering="crispEdges"/>
<line x1="1147.5" y1="636.8" x2="1157.6" y2="631.7" stroke="#000" stroke-width="0.9" />
<circle cx="1158.9" cy="631.9" r="1.1" fill="#000" />
<circle cx="1158.9" cy="637.4" r="1" fill="#000" />
<path d="M1159.1 644.4 v3.2 M1157.9 644.4 h2.4" stroke="#000" stroke-width="0.9" fill="none" />
<line x1="1150.3" y1="650.2" x2="1160.2" y2="650.2" stroke="#000" stroke-width="0.9"  shape-rendering="crispEdges"/>
<path d="M1148.1 650.2 l3.8 -1.8 v3.6 z" stroke="#000" stroke-width="0.3" fill="#000" />
<rect x="1153.5" y="655.2" width="6.9" height="23.1" fill="#fff" stroke="#000" stroke-width="1"  shape-rendering="crispEdges"/>
<line x1="1153.5" y1="666.3" x2="1160.4" y2="666.3" stroke="#000" stroke-width="1"  shape-rendering="crispEdges"/>
<path d="M1154.5 664.4 l2.5 -5 l2.5 5 M1154.3 668.2 L1159.7 674.7" stroke="#000" stroke-width="0.9" fill="none" />
<rect x="1148.4" y="666.6" width="3.9" height="7.5" fill="#fff" stroke="#000" stroke-width="0.9"  shape-rendering="crispEdges"/>
<path d="M1141.5 668.6 h3.2 M1141.5 670.9 h3.2" stroke="#000" stroke-width="1.1" fill="none" />
<text x="1139.7" y="689.9" font-size="9.3" fill="#0a0a0a" textLength="20.7" lengthAdjust="spacing" >XV02</text>
<rect x="1154.1" y="701.5" width="6.3" height="12.9" fill="#fff" stroke="#000" stroke-width="1"  shape-rendering="crispEdges"/>
<path d="M1155 702.9 l2.3 5 l2.3 -5 M1157.3 707.9 V714.4" stroke="#000" stroke-width="0.9" fill="none" />
<rect x="1147.3" y="714.7" width="12.9" height="26.9" fill="#fff" stroke="#000" stroke-width="1"  shape-rendering="crispEdges"/>
<line x1="1147.3" y1="728.7" x2="1160.2" y2="728.7" stroke="#000" stroke-width="1"  shape-rendering="crispEdges"/>
<line x1="1147.5" y1="724.1" x2="1157.6" y2="719" stroke="#000" stroke-width="0.9" />
<circle cx="1158.9" cy="719.2" r="1.1" fill="#000" />
<circle cx="1158.9" cy="724.7" r="1" fill="#000" />
<path d="M1159.1 731.7 v3.2 M1157.9 731.7 h2.4" stroke="#000" stroke-width="0.9" fill="none" />
<line x1="1150.3" y1="737.5" x2="1160.2" y2="737.5" stroke="#000" stroke-width="0.9"  shape-rendering="crispEdges"/>
<path d="M1148.1 737.5 l3.8 -1.8 v3.6 z" stroke="#000" stroke-width="0.3" fill="#000" />
<rect x="1153.5" y="742.5" width="6.9" height="23.1" fill="#fff" stroke="#000" stroke-width="1"  shape-rendering="crispEdges"/>
<line x1="1153.5" y1="753.6" x2="1160.4" y2="753.6" stroke="#000" stroke-width="1"  shape-rendering="crispEdges"/>
<path d="M1154.5 751.7 l2.5 -5 l2.5 5 M1154.3 755.5 L1159.7 762" stroke="#000" stroke-width="0.9" fill="none" />
<rect x="1148.4" y="753.9" width="3.9" height="7.5" fill="#fff" stroke="#000" stroke-width="0.9"  shape-rendering="crispEdges"/>
<path d="M1141.5 755.9 h3.2 M1141.5 758.2 h3.2" stroke="#000" stroke-width="1.1" fill="none" />
<text x="1139.7" y="774.6" font-size="9.3" fill="#0a0a0a" textLength="20.7" lengthAdjust="spacing" >XV03</text>
<rect x="1057.2" y="663.4" width="11.5" height="12.9" fill="#fff" stroke="#000" stroke-width="1"  shape-rendering="crispEdges"/>
<line x1="1064.6" y1="663.4" x2="1064.6" y2="676.3" stroke="#000" stroke-width="1"  shape-rendering="crispEdges"/>
<path d="M1058.2 664.8 l2.7 5.2 l2.7 -5.2 M1060.9 670 V676.3" stroke="#000" stroke-width="0.9" fill="none" />
<line x1="1068.7" y1="676.3" x2="1068.7" y2="715.4" stroke="#000" stroke-width="1"  shape-rendering="crispEdges"/>
<rect x="1050.3" y="676.3" width="14.3" height="27.2" fill="#fff" stroke="#000" stroke-width="1"  shape-rendering="crispEdges"/>
<line x1="1050.3" y1="687.3" x2="1064.6" y2="687.3" stroke="#000" stroke-width="1"  shape-rendering="crispEdges"/>
<line x1="1050.3" y1="690.1" x2="1064.6" y2="690.1" stroke="#000" stroke-width="1"  shape-rendering="crispEdges"/>
<line x1="1050.3" y1="692.4" x2="1064.6" y2="692.4" stroke="#000" stroke-width="1"  shape-rendering="crispEdges"/>
<path d="M1052.8 679.7 L1064.1 683.6" stroke="#000" stroke-width="0.9" fill="none" />
<path d="M1051.9 679.1 l3.6 -0.2 l-1 2.8 z" stroke="#000" stroke-width="0.3" fill="#000" />
<path d="M1063.9 687.3 l-3.6 -1.7 v3.4 z" stroke="#000" stroke-width="0.3" fill="#000" />
<path d="M1063.9 691.2 l-3.2 -1.4 v2.8 z" stroke="#000" stroke-width="0.3" fill="#000" />
<path d="M1052.8 699.9 L1064.1 696.5" stroke="#000" stroke-width="0.9" fill="none" />
<path d="M1051.7 700.5 l3.6 0.6 l-1.2 -2.8 z" stroke="#000" stroke-width="0.3" fill="#000" />
<rect x="1064.6" y="679.3" width="8.7" height="8" fill="none" stroke="#000" stroke-width="1"  shape-rendering="crispEdges"/>
<rect x="1057.2" y="703.5" width="7.6" height="23.9" fill="#fff" stroke="#000" stroke-width="1"  shape-rendering="crispEdges"/>
<line x1="1057.2" y1="715" x2="1064.8" y2="715" stroke="#000" stroke-width="1"  shape-rendering="crispEdges"/>
<path d="M1058.2 713 l2.8 -5.5 l2.8 5.5 M1064 717 L1058 725" stroke="#000" stroke-width="0.9" fill="none" />
<rect x="1052.1" y="715" width="3.2" height="8.7" fill="#fff" stroke="#000" stroke-width="0.9"  shape-rendering="crispEdges"/>
<path d="M1043.8 716.5 h5 M1043.8 720.9 h5" stroke="#000" stroke-width="1.2" fill="none" />
<text x="1048.4" y="738.6" font-size="9.3" fill="#0a0a0a" textLength="20.3" lengthAdjust="spacing" >XV01</text>
<rect x="1270.4" y="663.4" width="11.5" height="12.9" fill="#fff" stroke="#000" stroke-width="1"  shape-rendering="crispEdges"/>
<line x1="1277.8" y1="663.4" x2="1277.8" y2="676.3" stroke="#000" stroke-width="1"  shape-rendering="crispEdges"/>
<path d="M1271.4 664.8 l2.7 5.2 l2.7 -5.2 M1274.1 670 V676.3" stroke="#000" stroke-width="0.9" fill="none" />
<line x1="1281.9" y1="676.3" x2="1281.9" y2="715.4" stroke="#000" stroke-width="1"  shape-rendering="crispEdges"/>
<rect x="1263.5" y="676.3" width="14.3" height="27.2" fill="#fff" stroke="#000" stroke-width="1"  shape-rendering="crispEdges"/>
<line x1="1263.5" y1="687.3" x2="1277.8" y2="687.3" stroke="#000" stroke-width="1"  shape-rendering="crispEdges"/>
<line x1="1263.5" y1="690.1" x2="1277.8" y2="690.1" stroke="#000" stroke-width="1"  shape-rendering="crispEdges"/>
<line x1="1263.5" y1="692.4" x2="1277.8" y2="692.4" stroke="#000" stroke-width="1"  shape-rendering="crispEdges"/>
<path d="M1266 679.7 L1277.3 683.6" stroke="#000" stroke-width="0.9" fill="none" />
<path d="M1265.1 679.1 l3.6 -0.2 l-1 2.8 z" stroke="#000" stroke-width="0.3" fill="#000" />
<path d="M1277.1 687.3 l-3.6 -1.7 v3.4 z" stroke="#000" stroke-width="0.3" fill="#000" />
<path d="M1277.1 691.2 l-3.2 -1.4 v2.8 z" stroke="#000" stroke-width="0.3" fill="#000" />
<path d="M1266 699.9 L1277.3 696.5" stroke="#000" stroke-width="0.9" fill="none" />
<path d="M1264.9 700.5 l3.6 0.6 l-1.2 -2.8 z" stroke="#000" stroke-width="0.3" fill="#000" />
<rect x="1277.8" y="679.3" width="8.7" height="8" fill="none" stroke="#000" stroke-width="1"  shape-rendering="crispEdges"/>
<rect x="1270.4" y="703.5" width="7.6" height="23.9" fill="#fff" stroke="#000" stroke-width="1"  shape-rendering="crispEdges"/>
<line x1="1270.4" y1="715" x2="1278" y2="715" stroke="#000" stroke-width="1"  shape-rendering="crispEdges"/>
<path d="M1271.4 713 l2.8 -5.5 l2.8 5.5 M1277.2 717 L1271.2 725" stroke="#000" stroke-width="0.9" fill="none" />
<rect x="1265.3" y="715" width="3.2" height="8.7" fill="#fff" stroke="#000" stroke-width="0.9"  shape-rendering="crispEdges"/>
<path d="M1257 716.5 h5 M1257 720.9 h5" stroke="#000" stroke-width="1.2" fill="none" />
<text x="1261.6" y="738.6" font-size="9.3" fill="#0a0a0a" textLength="20.3" lengthAdjust="spacing" >XV04</text>
<rect x="1035.3" y="418.5" width="53.5" height="54.6" fill="none" stroke="#000" stroke-width="1" stroke-dasharray="7 2 1.5 2"/>
<rect x="1048.4" y="436.7" width="13.1" height="12.8" fill="#fff" stroke="#000" stroke-width="1"  shape-rendering="crispEdges"/>
<path d="M1050.9 446.5 h8" stroke="#000" stroke-width="1" fill="none" />
<path d="M1050 446.5 l3 -1.5 v3 z M1059.9 446.5 l-3 -1.5 v3 z" stroke="#000" stroke-width="0.4" fill="#000" />
<path d="M1048.4 438.9 l-3.3 1.8 l3.3 1.8" stroke="#000" stroke-width="0.9" fill="none" />
<path d="M1054.8 436.7 L1059.2 435.7 L1050.4 433.7 L1059.2 431.7 L1050.4 429.7 L1059.2 427.7 L1050.4 425.7 L1054.8 424.7" stroke="#000" stroke-width="0.9" fill="none" />
<line x1="1049.6" y1="433.5" x2="1061" y2="428.4" stroke="#000" stroke-width="0.9" />
<path d="M1062.8 427.6 l-3.8 -0.6 l1.2 3 z" stroke="#000" stroke-width="0.4" fill="#000" />
<path d="M1052.3 449.5 v6.8 h13.5 v-6.8" fill="none" stroke="#000" stroke-width="1" stroke-dasharray="2.5 1.6"/>
<circle cx="1078.5" cy="428.4" r="7" fill="#fff" stroke="#000" stroke-width="1" />
<line x1="1082.7" y1="432.6" x2="1074.9" y2="424.8" stroke="#000" stroke-width="1.1" />
<path d="M1073.9 423.8 l3.6 0.9 l-2.7 2.7 z" stroke="#000" stroke-width="0.4" fill="#000" />
<path d="M1040.1 446.5 V465.5 H1078.5 V435.4" stroke="#000" stroke-width="1" fill="none" />
<circle cx="1056" cy="465.5" r="4" fill="#fff" stroke="#000" stroke-width="1" />
<path d="M1052.8 468 l3.2 4 l3.2 -4" stroke="#000" stroke-width="0.8" fill="none" />
<circle cx="1040.1" cy="446.5" r="1.2" fill="#000" />
<circle cx="1078.5" cy="446.5" r="1.2" fill="#000" />
<text x="985.5" y="443.8" font-size="9.3" fill="#0a0a0a" textLength="28.2" lengthAdjust="spacing" >200-V7</text>
<rect x="1206.3" y="418.5" width="53.5" height="54.6" fill="none" stroke="#000" stroke-width="1" stroke-dasharray="7 2 1.5 2"/>
<rect x="1219.4" y="436.7" width="13.1" height="12.8" fill="#fff" stroke="#000" stroke-width="1"  shape-rendering="crispEdges"/>
<path d="M1221.9 446.5 h8" stroke="#000" stroke-width="1" fill="none" />
<path d="M1221 446.5 l3 -1.5 v3 z M1230.9 446.5 l-3 -1.5 v3 z" stroke="#000" stroke-width="0.4" fill="#000" />
<path d="M1219.4 438.9 l-3.3 1.8 l3.3 1.8" stroke="#000" stroke-width="0.9" fill="none" />
<path d="M1225.8 436.7 L1230.2 435.7 L1221.4 433.7 L1230.2 431.7 L1221.4 429.7 L1230.2 427.7 L1221.4 425.7 L1225.8 424.7" stroke="#000" stroke-width="0.9" fill="none" />
<line x1="1220.6" y1="433.5" x2="1232" y2="428.4" stroke="#000" stroke-width="0.9" />
<path d="M1233.8 427.6 l-3.8 -0.6 l1.2 3 z" stroke="#000" stroke-width="0.4" fill="#000" />
<path d="M1223.3 449.5 v6.8 h13.5 v-6.8" fill="none" stroke="#000" stroke-width="1" stroke-dasharray="2.5 1.6"/>
<circle cx="1249.5" cy="428.4" r="7" fill="#fff" stroke="#000" stroke-width="1" />
<line x1="1253.7" y1="432.6" x2="1245.9" y2="424.8" stroke="#000" stroke-width="1.1" />
<path d="M1244.9 423.8 l3.6 0.9 l-2.7 2.7 z" stroke="#000" stroke-width="0.4" fill="#000" />
<path d="M1211.1 446.5 V465.5 H1249.5 V435.4" stroke="#000" stroke-width="1" fill="none" />
<circle cx="1227" cy="465.5" r="4" fill="#fff" stroke="#000" stroke-width="1" />
<path d="M1223.8 468 l3.2 4 l3.2 -4" stroke="#000" stroke-width="0.8" fill="none" />
<circle cx="1211.1" cy="446.5" r="1.2" fill="#000" />
<circle cx="1249.5" cy="446.5" r="1.2" fill="#000" />
<text x="1156.4" y="443.8" font-size="9.3" fill="#0a0a0a" textLength="28.2" lengthAdjust="spacing" >200-V8</text>
<circle cx="1312.3" cy="407.9" r="7.8" fill="#fff" stroke="#000" stroke-width="1.1" />
<path d="M1312.3 400.3 l2.6 4.4 h-5.2 z M1312.3 411.3 l2.4 4 h-4.8 z" stroke="#000" stroke-width="0.3" fill="#000" />
<path d="M1320 406.6 h6.2 M1320 409.8 h6.2" stroke="#000" stroke-width="1" fill="none" />
<line x1="1312.3" y1="400" x2="1312.3" y2="394" stroke="#000" stroke-width="1"  shape-rendering="crispEdges"/>
<rect x="1308.5" y="381.2" width="7.6" height="12.8" fill="#fff" stroke="#000" stroke-width="1"  shape-rendering="crispEdges"/>
<line x1="1312.3" y1="381.2" x2="1312.3" y2="378.8" stroke="#000" stroke-width="1"  shape-rendering="crispEdges"/>
<path d="M1313.8 384 h-2.6 v3.2 h2.6 v3.2 h-2.6" stroke="#000" stroke-width="0.8" fill="none" />
<text x="1269.4" y="411" font-size="9.3" fill="#0a0a0a" textLength="28.8" lengthAdjust="spacing" >200-G1</text>
<text x="1433" y="396.8" font-size="9.3" fill="#0a0a0a" textLength="33.6" lengthAdjust="spacing" >200-V10</text>
<rect x="1462.3" y="401.6" width="27.5" height="13.1" fill="#fff" stroke="#000" stroke-width="1.1"  shape-rendering="crispEdges"/>
<line x1="1475.4" y1="401.6" x2="1475.4" y2="414.7" stroke="#000" stroke-width="1"  shape-rendering="crispEdges"/>
<circle cx="1469.5" cy="404.6" r="1.4" fill="#000" />
<line x1="1469.5" y1="404.6" x2="1469.5" y2="414.7" stroke="#000" stroke-width="1"  shape-rendering="crispEdges"/>
<path d="M1480 404 h5 M1482.6 401.6 v2.4 M1480 412 h5 M1482.6 412 v2.7" stroke="#000" stroke-width="0.9" fill="none" />
<path d="M1440.5 408.5 H1451.6 M1458.6 408.2 H1462.3 M1489.8 408.2 H1493.5 M1500.7 408.5 H1508.5" stroke="#000" stroke-width="1" fill="none" />
<path d="M1451.6 404.8 l7 3.4 l-7 3.4 z M1500.7 404.8 l-7.2 3.4 l7.2 3.4 z" stroke="#000" stroke-width="1" fill="#fff" />
<line x1="1482.6" y1="401.6" x2="1482.6" y2="388.2" stroke="#000" stroke-width="1"  shape-rendering="crispEdges"/>
<path d="M1482.6 383.7 l2.3 4.6 h-4.6 z" stroke="#000" stroke-width="0.9" fill="#fff" />
<line x1="1482.6" y1="414.7" x2="1482.6" y2="428.5" stroke="#000" stroke-width="1"  shape-rendering="crispEdges"/>
<path d="M1482.6 428.3 l2.2 3.5 h-4.4 z" stroke="#000" stroke-width="0.9" fill="#fff" />
<text x="1484.3" y="400" font-size="8.5" fill="#0a0a0a" >2</text>
<text x="1484.3" y="423" font-size="8.5" fill="#0a0a0a" >1</text>
</svg>
<svg id="ui" width="1912" height="1031" viewBox="0 0 1912 1031">
<text x="814" y="8.7" font-size="11" fill="#ffffff" textLength="177" lengthAdjust="spacing" >SEE Electrical - SN_P_K7_2_V1: 0002</text>
<text x="17.7" y="36" font-size="11.5" fill="#ffffff" textLength="18.5" lengthAdjust="spacing" >Plik</text>
<text x="145" y="36" font-size="11.5" fill="#ffffff" textLength="39" lengthAdjust="spacing" >Ogólne</text>
<text x="212" y="36" font-size="11.5" fill="#ffffff" textLength="31.7" lengthAdjust="spacing" >Edycja</text>
<text x="271.8" y="36" font-size="11.5" fill="#ffffff" textLength="34.2" lengthAdjust="spacing" >Widok</text>
<text x="334" y="36" font-size="11.5" fill="#ffffff" textLength="27" lengthAdjust="spacing" >Rysuj</text>
<text x="390" y="36" font-size="11.5" fill="#ffffff" textLength="71" lengthAdjust="spacing" >Przetwarzanie</text>
<text x="491" y="36" font-size="11.5" fill="#ffffff" textLength="60" lengthAdjust="spacing" >Schematyka</text>
<text x="581" y="36" font-size="11.5" fill="#ffffff" textLength="51" lengthAdjust="spacing" >Widok 3D</text>
<text x="662" y="36" font-size="11.5" fill="#ffffff" textLength="60" lengthAdjust="spacing" >Komentarze</text>
<text x="753.8" y="36" font-size="11.5" fill="#ffffff" textLength="152.2" lengthAdjust="spacing" >Zewnętrzne oprogramowanie</text>
<text x="939" y="36" font-size="11.5" fill="#ffffff" textLength="111" lengthAdjust="spacing" >Polecenia dodatkowe</text>
<text x="1081.8" y="36" font-size="11.5" fill="#ffffff" textLength="101.5" lengthAdjust="spacing" >Moduły dodatkowe</text>
<text x="73" y="36" font-size="11.5" fill="#2B579A" textLength="43" lengthAdjust="spacing" >Rysunek</text>
<rect x="1825" y="5" width="6.5" height="2" fill="#ffffff" />
<rect x="1862.5" y="1.5" width="5" height="4" fill="none" stroke="#ffffff" stroke-width="1.2" />
<rect x="1860.5" y="3.5" width="5" height="4" fill="#2B579A" stroke="#ffffff" stroke-width="1.2" />
<path d="M1897.5 0.5 L1903.5 6.5 M1903.5 0.5 L1897.5 6.5" stroke="#ffffff" stroke-width="1.7" fill="none" />
<path d="M1820.5 33.5 L1823.5 30 L1826.5 33.5" stroke="#ffffff" stroke-width="1.6" fill="none" />
<text x="1834.5" y="36" font-size="11.5" fill="#ffffff" textLength="17.5" lengthAdjust="spacing" >Styl</text>
<path d="M1861.5 28 L1867.5 28 L1864.5 31 Z" stroke="#ffffff" stroke-width="0" fill="#ffffff" />
<circle cx="1881" cy="31" r="6" fill="none" stroke="#ffffff" stroke-width="1.6" />
<text x="1881" y="35" font-size="10" fill="#ffffff" font-weight="bold" text-anchor="middle" >?</text>
<circle cx="1905" cy="31" r="6" fill="none" stroke="#ffffff" stroke-width="1.6" />
<text x="1905" y="35" font-size="10" fill="#ffffff" font-weight="bold" text-anchor="middle" font-family="Liberation Serif" >i</text>
<rect x="401" y="56.2" width="140.6" height="21.5" fill="#c3c3c3" />
<rect x="401" y="85.4" width="126.9" height="21.6" fill="#c3c3c3" />
<rect x="550" y="56.2" width="176" height="21.5" fill="#c3c3c3" />
<rect x="550" y="85.4" width="128.8" height="21.6" fill="#c3c3c3" />
<text x="28.5" y="71.3" font-size="11.5" fill="#3b3b3b" textLength="28.5" lengthAdjust="spacing" >Nowy</text>
<text x="28.5" y="100.4" font-size="11.5" fill="#3b3b3b" textLength="37.5" lengthAdjust="spacing" >Otwórz</text>
<text x="100.4" y="71.3" font-size="11.5" fill="#3b3b3b" textLength="26.1" lengthAdjust="spacing" >Usuń</text>
<text x="100.4" y="100.4" font-size="11.5" fill="#3b3b3b" textLength="39.2" lengthAdjust="spacing" >Zamknij</text>
<text x="174.4" y="71.3" font-size="11.5" fill="#3b3b3b" textLength="51.6" lengthAdjust="spacing" >Poprzedni</text>
<text x="174.4" y="100.4" font-size="11.5" fill="#3b3b3b" textLength="47.6" lengthAdjust="spacing" >Następny</text>
<text x="263.4" y="71.3" font-size="11.5" fill="#a8a8a8" textLength="35.2" lengthAdjust="spacing" >Projekt</text>
<text x="263.4" y="100.4" font-size="11.5" fill="#3b3b3b" textLength="42.2" lengthAdjust="spacing" >Rysunek</text>
<text x="343.4" y="71.3" font-size="11.5" fill="#a8a8a8" textLength="33.6" lengthAdjust="spacing" >Moduł</text>
<text x="343.4" y="100.4" font-size="11.5" fill="#3b3b3b" textLength="42.2" lengthAdjust="spacing" >Rysunek</text>
<text x="423.4" y="71.3" font-size="11.5" fill="#3b3b3b" textLength="114.6" lengthAdjust="spacing" >Eksplorator projektów</text>
<text x="423.4" y="100.4" font-size="11.5" fill="#3b3b3b" textLength="100.4" lengthAdjust="spacing" >Eksplorator symboli</text>
<text x="572.4" y="71.3" font-size="11.5" fill="#3b3b3b" textLength="149.6" lengthAdjust="spacing" >Eksplorator symboli wg kodu</text>
<text x="572.4" y="100.4" font-size="11.5" fill="#3b3b3b" textLength="102.4" lengthAdjust="spacing" >Eksplorator poleceń</text>
<text x="756" y="71.3" font-size="11.5" fill="#3b3b3b" textLength="86.8" lengthAdjust="spacing" >Podgląd rysunku</text>
<text x="756" y="100.4" font-size="11.5" fill="#3b3b3b" textLength="122" lengthAdjust="spacing" >Eksplorator właściwości</text>
<text x="96.4" y="129" font-size="11.5" fill="#6a6a6a" textLength="42.2" lengthAdjust="spacing" >Rysunek</text>
<text x="248" y="129" font-size="11.5" fill="#6a6a6a" textLength="53.6" lengthAdjust="spacing" >Informacje</text>
<text x="324.4" y="129" font-size="11.5" fill="#6a6a6a" textLength="61.6" lengthAdjust="spacing" >Właściwości</text>
<text x="610" y="129" font-size="11.5" fill="#6a6a6a" textLength="62" lengthAdjust="spacing" >Widoczność</text>
<line x1="234.5" y1="48" x2="234.5" y2="131" stroke="#dadada" stroke-width="1" />
<line x1="314.5" y1="48" x2="314.5" y2="131" stroke="#dadada" stroke-width="1" />
<line x1="394.3" y1="48" x2="394.3" y2="131" stroke="#dadada" stroke-width="1" />
<line x1="886.7" y1="48" x2="886.7" y2="131" stroke="#dadada" stroke-width="1" />
<text x="2.5" y="198.8" font-size="18.5" fill="#505050" textLength="59" lengthAdjust="spacing" >Projekt</text>
<path d="M321.5 190.5 L331 190.5 L326.2 195.5 Z" stroke="none" stroke-width="0" fill="#666" />
<path d="M343.5 187.5 h4 v5 h-4 z M342 192.5 h7 M345.5 192.5 v4" stroke="#666" stroke-width="1" fill="none" />
<path d="M361 189.5 l6.5 6.5 M367.5 189.5 l-6.5 6.5" stroke="#666" stroke-width="1.5" fill="none" />
<path d="M388.5 182.5 L383.5 187 L388.5 191.5 Z" stroke="#888" stroke-width="1" fill="#ccc" />
<path d="M1902 182.5 L1907 187 L1902 191.5 Z" stroke="#888" stroke-width="1" fill="#e8e8e8" />
<path d="M396.5 198.5 L413.5 177.5 L576 177.5 L578.5 180 L563.5 198.5" stroke="#c9c9c9" stroke-width="1" fill="#eaeaea" />
<path d="M563.5 199.5 L580.5 178.5 Q581.5 177.5 583 177.5 L743 177.5 Q745.5 177.5 745.5 180 L745.5 199.5 Z" stroke="#c4c4c4" stroke-width="1" fill="#ffffff" />
<text x="455.4" y="192" font-size="12" fill="#444" textLength="100.4" lengthAdjust="spacing" >SN_P_K7_2_V1: 0004</text>
<text x="613" y="192" font-size="12" fill="#2466b3" font-weight="bold" textLength="103.8" lengthAdjust="spacing" >SN_P_K7_2_V1: 0002</text>
<path d="M731 184 l6 6 M737 184 l-6 6" stroke="#555" stroke-width="1.9" fill="none" />
<circle cx="426" cy="187" r="3.7" fill="none" stroke="#1c2ea0" stroke-width="1.3" />
<path d="M423.5 184.5 l5 5 M428.5 184.5 l-5 5" stroke="#1c2ea0" stroke-width="1.1" fill="none" />
<path d="M426 181 v2.5 M426 190.5 v2.5" stroke="#1c2ea0" stroke-width="1.2" fill="none" />
<circle cx="593.6" cy="187" r="3.7" fill="none" stroke="#1c2ea0" stroke-width="1.3" />
<path d="M591.1 184.5 l5 5 M596.1 184.5 l-5 5" stroke="#1c2ea0" stroke-width="1.1" fill="none" />
<path d="M593.6 181 v2.5 M593.6 190.5 v2.5" stroke="#1c2ea0" stroke-width="1.2" fill="none" />
<text x="3" y="1027.5" font-size="11.5" fill="#444" textLength="93" lengthAdjust="spacing" >Pomoc, naciśnij F1</text>
<text x="1817" y="1027.5" font-size="10.8" fill="#b0b0b0" textLength="19.5" lengthAdjust="spacing" >CAP</text>
<text x="1842" y="1027.5" font-size="10.8" fill="#555" textLength="26" lengthAdjust="spacing" >NUM</text>
<text x="1874" y="1027.5" font-size="10.8" fill="#b0b0b0" textLength="25" lengthAdjust="spacing" >SCRL</text>
<rect x="1908" y="1027" width="2" height="2" fill="#c0c0c0" />
<rect x="1908" y="1027" width="2" height="2" fill="#c0c0c0" />
<rect x="1908" y="1027" width="2" height="2" fill="#c0c0c0" />
<rect x="1904" y="1027" width="2" height="2" fill="#c0c0c0" />
<rect x="1908" y="1023" width="2" height="2" fill="#c0c0c0" />
<text x="20" y="1004.5" font-size="11.5" fill="#444" textLength="35.7" lengthAdjust="spacing" >Projekt</text>
<text x="85.4" y="1004.5" font-size="11.5" fill="#444" textLength="42.1" lengthAdjust="spacing" >Symbole</text>
<text x="157.4" y="1004.5" font-size="11.5" fill="#444" textLength="91.2" lengthAdjust="spacing" >Symbole wg kodu</text>
<text x="278.2" y="1004.5" font-size="11.5" fill="#444" textLength="48.2" lengthAdjust="spacing" >Polecenia</text>
<path d="M8.5 978 L3.5 982.5 L8.5 987" stroke="#555" stroke-width="1.8" fill="none" />
<path d="M364.5 978 L369.5 982.5 L364.5 987" stroke="#555" stroke-width="1.8" fill="none" />
<line x1="26.5" y1="226" x2="26.5" y2="442" stroke="#b0b0b0" stroke-width="1" stroke-dasharray="1 1"/>
<line x1="46.5" y1="258" x2="46.5" y2="378.5" stroke="#b0b0b0" stroke-width="1" stroke-dasharray="1 1"/>
<rect x="2" y="213.9" width="9" height="9" fill="#fff" stroke="#8a8a8a" stroke-width="1" />
<line x1="4" y1="218.4" x2="9" y2="218.4" stroke="#333" stroke-width="1" />
<line x1="11" y1="218.4" x2="20" y2="218.4" stroke="#b0b0b0" stroke-width="1" stroke-dasharray="1 1"/>
<circle cx="22.5" cy="215.4" r="3" fill="#f3d34a" stroke="#b08a1a" stroke-width="0.6" />
<path d="M27 217.4 l3 -3 l3 3 l-3 3 z" stroke="#b03ab0" stroke-width="0.6" fill="#e37be3" />
<path d="M24 222.4 l3 -3 l3 3 l-3 3 z" stroke="#2a62c0" stroke-width="0.6" fill="#6aa4ee" />
<text x="40.2" y="222.4" font-size="11" fill="#1a1a1a" textLength="334" lengthAdjust="spacing" >E:\Automatyka\G&amp;H\G&amp;H_Partynia\Linia miksera H14_K7_2\Naważani</text>
<line x1="27" y1="234.4" x2="37" y2="234.4" stroke="#b0b0b0" stroke-width="1" stroke-dasharray="1 1"/>
<rect x="22" y="229.9" width="9" height="9" fill="#fff" stroke="#8a8a8a" stroke-width="1" />
<line x1="24" y1="234.4" x2="29" y2="234.4" stroke="#333" stroke-width="1" />
<line x1="26.5" y1="231.9" x2="26.5" y2="236.9" stroke="#333" stroke-width="1" />
<path d="M37.5 234.4 l4 -4.5 l4 4.5 l-4 4.5 z" stroke="#062a80" stroke-width="0.9" fill="#174fb8" />
<path d="M38.4 234.4 l3.2 -3.6 l2 2.2 l-3.2 3.4 z" stroke="none" stroke-width="0" fill="#7fb6f2" />
<path d="M46 234.4 l4 -4.5 l4 4.5 l-4 4.5 z" stroke="#062a80" stroke-width="0.9" fill="#174fb8" />
<path d="M46.9 234.4 l3.2 -3.6 l2 2.2 l-3.2 3.4 z" stroke="none" stroke-width="0" fill="#7fb6f2" />
<text x="60.5" y="238.4" font-size="11" fill="#1a1a1a" textLength="76" lengthAdjust="spacing" >Strona tytułowa</text>
<line x1="27" y1="250.4" x2="37" y2="250.4" stroke="#b0b0b0" stroke-width="1" stroke-dasharray="1 1"/>
<rect x="22" y="245.9" width="9" height="9" fill="#fff" stroke="#8a8a8a" stroke-width="1" />
<line x1="24" y1="250.4" x2="29" y2="250.4" stroke="#333" stroke-width="1" />
<path d="M37.5 250.4 l4 -4.5 l4 4.5 l-4 4.5 z" stroke="#062a80" stroke-width="0.9" fill="#174fb8" />
<path d="M38.4 250.4 l3.2 -3.6 l2 2.2 l-3.2 3.4 z" stroke="none" stroke-width="0" fill="#7fb6f2" />
<path d="M46 250.4 l4 -4.5 l4 4.5 l-4 4.5 z" stroke="#062a80" stroke-width="0.9" fill="#174fb8" />
<path d="M46.9 250.4 l3.2 -3.6 l2 2.2 l-3.2 3.4 z" stroke="none" stroke-width="0" fill="#7fb6f2" />
<text x="60.5" y="254.4" font-size="11" fill="#1a1a1a" textLength="106.5" lengthAdjust="spacing" >Schematy zasadnicze</text>
<line x1="27" y1="394.4" x2="37" y2="394.4" stroke="#b0b0b0" stroke-width="1" stroke-dasharray="1 1"/>
<path d="M37.5 394.4 l4 -4.5 l4 4.5 l-4 4.5 z" stroke="#062a80" stroke-width="0.9" fill="#174fb8" />
<path d="M38.4 394.4 l3.2 -3.6 l2 2.2 l-3.2 3.4 z" stroke="none" stroke-width="0" fill="#7fb6f2" />
<path d="M46 394.4 l4 -4.5 l4 4.5 l-4 4.5 z" stroke="#062a80" stroke-width="0.9" fill="#174fb8" />
<path d="M46.9 394.4 l3.2 -3.6 l2 2.2 l-3.2 3.4 z" stroke="none" stroke-width="0" fill="#7fb6f2" />
<text x="60.5" y="398.4" font-size="11" fill="#1a1a1a" textLength="121.8" lengthAdjust="spacing" >Wykorzystanie zestyków</text>
<line x1="27" y1="410.4" x2="37" y2="410.4" stroke="#b0b0b0" stroke-width="1" stroke-dasharray="1 1"/>
<path d="M37.5 410.4 l4 -4.5 l4 4.5 l-4 4.5 z" stroke="#062a80" stroke-width="0.9" fill="#174fb8" />
<path d="M38.4 410.4 l3.2 -3.6 l2 2.2 l-3.2 3.4 z" stroke="none" stroke-width="0" fill="#7fb6f2" />
<path d="M46 410.4 l4 -4.5 l4 4.5 l-4 4.5 z" stroke="#062a80" stroke-width="0.9" fill="#174fb8" />
<path d="M46.9 410.4 l3.2 -3.6 l2 2.2 l-3.2 3.4 z" stroke="none" stroke-width="0" fill="#7fb6f2" />
<text x="60.5" y="414.4" font-size="11" fill="#1a1a1a" textLength="47.8" lengthAdjust="spacing" >Załączniki</text>
<line x1="27" y1="426.4" x2="37" y2="426.4" stroke="#b0b0b0" stroke-width="1" stroke-dasharray="1 1"/>
<rect x="22" y="421.9" width="9" height="9" fill="#fff" stroke="#8a8a8a" stroke-width="1" />
<line x1="24" y1="426.4" x2="29" y2="426.4" stroke="#333" stroke-width="1" />
<line x1="26.5" y1="423.9" x2="26.5" y2="428.9" stroke="#333" stroke-width="1" />
<path d="M37.5 426.4 l4 -4.5 l4 4.5 l-4 4.5 z" stroke="#062a80" stroke-width="0.9" fill="#174fb8" />
<path d="M38.4 426.4 l3.2 -3.6 l2 2.2 l-3.2 3.4 z" stroke="none" stroke-width="0" fill="#7fb6f2" />
<path d="M46 426.4 l4 -4.5 l4 4.5 l-4 4.5 z" stroke="#062a80" stroke-width="0.9" fill="#174fb8" />
<path d="M46.9 426.4 l3.2 -3.6 l2 2.2 l-3.2 3.4 z" stroke="none" stroke-width="0" fill="#7fb6f2" />
<text x="60.5" y="430.4" font-size="11" fill="#1a1a1a" textLength="59.1" lengthAdjust="spacing" >Zestawienia</text>
<line x1="27" y1="442.4" x2="37" y2="442.4" stroke="#b0b0b0" stroke-width="1" stroke-dasharray="1 1"/>
<rect x="22" y="437.9" width="9" height="9" fill="#fff" stroke="#8a8a8a" stroke-width="1" />
<line x1="24" y1="442.4" x2="29" y2="442.4" stroke="#333" stroke-width="1" />
<line x1="26.5" y1="439.9" x2="26.5" y2="444.9" stroke="#333" stroke-width="1" />
<path d="M37.5 442.4 l4 -4.5 l4 4.5 l-4 4.5 z" stroke="#062a80" stroke-width="0.9" fill="#174fb8" />
<path d="M38.4 442.4 l3.2 -3.6 l2 2.2 l-3.2 3.4 z" stroke="none" stroke-width="0" fill="#7fb6f2" />
<path d="M46 442.4 l4 -4.5 l4 4.5 l-4 4.5 z" stroke="#062a80" stroke-width="0.9" fill="#174fb8" />
<path d="M46.9 442.4 l3.2 -3.6 l2 2.2 l-3.2 3.4 z" stroke="none" stroke-width="0" fill="#7fb6f2" />
<text x="60.5" y="446.4" font-size="11" fill="#1a1a1a" textLength="121" lengthAdjust="spacing" >Baza techniczna projektu</text>
<line x1="47" y1="266.4" x2="58" y2="266.4" stroke="#b0b0b0" stroke-width="1" stroke-dasharray="1 1"/>
<path d="M60.5 259.9 h7.5 l3 3 v10.5 h-10.5 z" stroke="#6b7f9c" stroke-width="1" fill="#f4f8ff" />
<line x1="62.5" y1="263.9" x2="69" y2="263.9" stroke="#5b86c8" stroke-width="1" />
<line x1="62.5" y1="266.3" x2="69" y2="266.3" stroke="#5b86c8" stroke-width="1" />
<line x1="62.5" y1="268.7" x2="69" y2="268.7" stroke="#5b86c8" stroke-width="1" />
<line x1="62.5" y1="271.1" x2="69" y2="271.1" stroke="#5b86c8" stroke-width="1" />
<text x="80.7" y="270.4" font-size="11" fill="#1a1a1a" textLength="131.3" lengthAdjust="spacing" >0001 Rozładunek Kaolin (1)</text>
<line x1="47" y1="282.4" x2="58" y2="282.4" stroke="#b0b0b0" stroke-width="1" stroke-dasharray="1 1"/>
<rect x="77.5" y="274.9" width="161" height="15.5" fill="#f3f3f3" />
<path d="M60.5 275.9 h7.5 l3 3 v10.5 h-10.5 z" stroke="#6b7f9c" stroke-width="1" fill="#f4f8ff" />
<line x1="62.5" y1="279.9" x2="69" y2="279.9" stroke="#5b86c8" stroke-width="1" />
<line x1="62.5" y1="282.3" x2="69" y2="282.3" stroke="#5b86c8" stroke-width="1" />
<line x1="62.5" y1="284.7" x2="69" y2="284.7" stroke="#5b86c8" stroke-width="1" />
<line x1="62.5" y1="287.1" x2="69" y2="287.1" stroke="#5b86c8" stroke-width="1" />
<path d="M65.5 286.4 l2.5 2.5 l4 -5" stroke="#2f9a2f" stroke-width="2" fill="none" />
<text x="80.7" y="286.4" font-size="11" fill="#1a1a1a" textLength="155.1" lengthAdjust="spacing" >0002 Rozładunek Sadza nr 1 (2)</text>
<line x1="47" y1="298.4" x2="58" y2="298.4" stroke="#b0b0b0" stroke-width="1" stroke-dasharray="1 1"/>
<path d="M60.5 291.9 h7.5 l3 3 v10.5 h-10.5 z" stroke="#6b7f9c" stroke-width="1" fill="#f4f8ff" />
<line x1="62.5" y1="295.9" x2="69" y2="295.9" stroke="#5b86c8" stroke-width="1" />
<line x1="62.5" y1="298.3" x2="69" y2="298.3" stroke="#5b86c8" stroke-width="1" />
<line x1="62.5" y1="300.7" x2="69" y2="300.7" stroke="#5b86c8" stroke-width="1" />
<line x1="62.5" y1="303.1" x2="69" y2="303.1" stroke="#5b86c8" stroke-width="1" />
<text x="80.7" y="302.4" font-size="11" fill="#1a1a1a" textLength="155.1" lengthAdjust="spacing" >0003 Rozładunek Sadza nr 2 (3)</text>
<line x1="47" y1="314.4" x2="58" y2="314.4" stroke="#b0b0b0" stroke-width="1" stroke-dasharray="1 1"/>
<path d="M60.5 307.9 h7.5 l3 3 v10.5 h-10.5 z" stroke="#6b7f9c" stroke-width="1" fill="#f4f8ff" />
<line x1="62.5" y1="311.9" x2="69" y2="311.9" stroke="#5b86c8" stroke-width="1" />
<line x1="62.5" y1="314.3" x2="69" y2="314.3" stroke="#5b86c8" stroke-width="1" />
<line x1="62.5" y1="316.7" x2="69" y2="316.7" stroke="#5b86c8" stroke-width="1" />
<line x1="62.5" y1="319.1" x2="69" y2="319.1" stroke="#5b86c8" stroke-width="1" />
<text x="80.7" y="318.4" font-size="11" fill="#1a1a1a" textLength="121.3" lengthAdjust="spacing" >0004 JB400 - KAOLIN (4)</text>
<line x1="47" y1="330.4" x2="58" y2="330.4" stroke="#b0b0b0" stroke-width="1" stroke-dasharray="1 1"/>
<path d="M60.5 323.9 h7.5 l3 3 v10.5 h-10.5 z" stroke="#6b7f9c" stroke-width="1" fill="#f4f8ff" />
<line x1="62.5" y1="327.9" x2="69" y2="327.9" stroke="#5b86c8" stroke-width="1" />
<line x1="62.5" y1="330.3" x2="69" y2="330.3" stroke="#5b86c8" stroke-width="1" />
<line x1="62.5" y1="332.7" x2="69" y2="332.7" stroke="#5b86c8" stroke-width="1" />
<line x1="62.5" y1="335.1" x2="69" y2="335.1" stroke="#5b86c8" stroke-width="1" />
<text x="80.7" y="334.4" font-size="11" fill="#1a1a1a" textLength="154.3" lengthAdjust="spacing" >0005 JB400 - SADZA NR 1/2 (5)</text>
<line x1="47" y1="346.4" x2="58" y2="346.4" stroke="#b0b0b0" stroke-width="1" stroke-dasharray="1 1"/>
<path d="M60.5 339.9 h7.5 l3 3 v10.5 h-10.5 z" stroke="#6b7f9c" stroke-width="1" fill="#f4f8ff" />
<line x1="62.5" y1="343.9" x2="69" y2="343.9" stroke="#5b86c8" stroke-width="1" />
<line x1="62.5" y1="346.3" x2="69" y2="346.3" stroke="#5b86c8" stroke-width="1" />
<line x1="62.5" y1="348.7" x2="69" y2="348.7" stroke="#5b86c8" stroke-width="1" />
<line x1="62.5" y1="351.1" x2="69" y2="351.1" stroke="#5b86c8" stroke-width="1" />
<text x="80.7" y="350.4" font-size="11" fill="#1a1a1a" textLength="97.3" lengthAdjust="spacing" >0006 JB500 cz.1 (6)</text>
<line x1="47" y1="362.4" x2="58" y2="362.4" stroke="#b0b0b0" stroke-width="1" stroke-dasharray="1 1"/>
<path d="M60.5 355.9 h7.5 l3 3 v10.5 h-10.5 z" stroke="#6b7f9c" stroke-width="1" fill="#f4f8ff" />
<line x1="62.5" y1="359.9" x2="69" y2="359.9" stroke="#5b86c8" stroke-width="1" />
<line x1="62.5" y1="362.3" x2="69" y2="362.3" stroke="#5b86c8" stroke-width="1" />
<line x1="62.5" y1="364.7" x2="69" y2="364.7" stroke="#5b86c8" stroke-width="1" />
<line x1="62.5" y1="367.1" x2="69" y2="367.1" stroke="#5b86c8" stroke-width="1" />
<text x="80.7" y="366.4" font-size="11" fill="#1a1a1a" textLength="97.3" lengthAdjust="spacing" >0007 JB500 cz.2 (7)</text>
<line x1="47" y1="378.4" x2="58" y2="378.4" stroke="#b0b0b0" stroke-width="1" stroke-dasharray="1 1"/>
<path d="M60.5 371.9 h7.5 l3 3 v10.5 h-10.5 z" stroke="#6b7f9c" stroke-width="1" fill="#f4f8ff" />
<line x1="62.5" y1="375.9" x2="69" y2="375.9" stroke="#5b86c8" stroke-width="1" />
<line x1="62.5" y1="378.3" x2="69" y2="378.3" stroke="#5b86c8" stroke-width="1" />
<line x1="62.5" y1="380.7" x2="69" y2="380.7" stroke="#5b86c8" stroke-width="1" />
<line x1="62.5" y1="383.1" x2="69" y2="383.1" stroke="#5b86c8" stroke-width="1" />
<text x="80.7" y="382.4" font-size="11" fill="#1a1a1a" textLength="97.3" lengthAdjust="spacing" >0008 JB500 cz.3 (8)</text>
<g transform="translate(11 59)">
<path d="M1.5 0.5 h7 l3 3 v10 h-10 z" stroke="#7f8ea6" stroke-width="1" fill="#ffffff" />
<rect x="8.5" y="8.5" width="6" height="7" fill="#fff" stroke="#444" stroke-width="1" />
<line x1="10" y1="11" x2="13" y2="11" stroke="#444" stroke-width="1" />
<line x1="10" y1="13.2" x2="13" y2="13.2" stroke="#444" stroke-width="1" />
</g>
<g transform="translate(9 88)">
<path d="M0.5 3 v10 h12 v-9 h-7 l-1.5 -2 h-3.5 z" stroke="#b58a1d" stroke-width="1" fill="#f3cf55" />
<path d="M2.5 6 h12 l-2 7 h-12 z" stroke="#b58a1d" stroke-width="0.8" fill="#fbe38a" />
<rect x="9.5" y="8" width="6" height="7" fill="#fff" stroke="#444" stroke-width="1" />
<line x1="11" y1="10.5" x2="14" y2="10.5" stroke="#444" stroke-width="1" />
<line x1="11" y1="12.7" x2="14" y2="12.7" stroke="#444" stroke-width="1" />
<path d="M9 2.5 q3 -3 6 0" stroke="#555" stroke-width="1" fill="none" />
</g>
<g transform="translate(81 59)">
<path d="M1.5 0.5 h7 l3 3 v10 h-10 z" stroke="#7f8ea6" stroke-width="1" fill="#eef3fb" />
<line x1="3" y1="4" x2="8" y2="4" stroke="#6f9ad6" stroke-width="1" />
<line x1="3" y1="6.3" x2="8" y2="6.3" stroke="#6f9ad6" stroke-width="1" />
<line x1="3" y1="8.6" x2="8" y2="8.6" stroke="#6f9ad6" stroke-width="1" />
<line x1="3" y1="10.9" x2="8" y2="10.9" stroke="#6f9ad6" stroke-width="1" />
<path d="M7.5 6.5 l7 7 M14.5 6.5 l-7 7" stroke="#e0241c" stroke-width="2.4" fill="none" />
</g>
<g transform="translate(81 88)">
<path d="M0.5 4 v10 h12 v-9 h-7 l-1.5 -2 h-3.5 z" stroke="#b58a1d" stroke-width="1" fill="#f3cf55" />
<path d="M2.5 7 h12 l-2 7 h-12 z" stroke="#b58a1d" stroke-width="0.8" fill="#fbe38a" />
<rect x="9.5" y="8" width="6" height="7" fill="#fff" stroke="#444" stroke-width="1" />
<line x1="11" y1="10.5" x2="14" y2="10.5" stroke="#444" stroke-width="1" />
<line x1="11" y1="12.7" x2="14" y2="12.7" stroke="#444" stroke-width="1" />
<text x="11" y="5" font-size="6" fill="#444" font-weight="bold" >5</text>
</g>
<g transform="translate(155 59)">
<path d="M4.5 0.5 h7.5 l3 3 v9 h-10.5 z" stroke="#7f8ea6" stroke-width="1" fill="#f2f6fd" />
<line x1="7" y1="4" x2="13" y2="4" stroke="#6f9ad6" stroke-width="1" />
<line x1="7" y1="6.3" x2="13" y2="6.3" stroke="#6f9ad6" stroke-width="1" />
<line x1="7" y1="8.6" x2="13" y2="8.6" stroke="#6f9ad6" stroke-width="1" />
<path d="M0.5 10.5 l5 -4.5 v2.7 h5 v3.6 h-5 v2.7 z" stroke="#1c4fa8" stroke-width="0.7" fill="#2f6fd0" />
</g>
<g transform="translate(155 88)">
<path d="M1.5 0.5 h7.5 l3 3 v10 h-10.5 z" stroke="#7f8ea6" stroke-width="1" fill="#f2f6fd" />
<line x1="3.5" y1="4" x2="9" y2="4" stroke="#6f9ad6" stroke-width="1" />
<line x1="3.5" y1="6.3" x2="9" y2="6.3" stroke="#6f9ad6" stroke-width="1" />
<line x1="3.5" y1="8.6" x2="9" y2="8.6" stroke="#6f9ad6" stroke-width="1" />
<line x1="3.5" y1="10.9" x2="9" y2="10.9" stroke="#6f9ad6" stroke-width="1" />
<path d="M16 10.5 l-5 -4.5 v2.7 h-5 v3.6 h5 v2.7 z" stroke="#1c4fa8" stroke-width="0.7" fill="#2f6fd0" />
</g>
<g opacity="0.45">
<g transform="translate(244 59)">
<rect x="1.5" y="1.5" width="13" height="11" fill="#fff" stroke="#8fa4c4" stroke-width="1" />
<circle cx="6" cy="7.5" r="4.8" fill="#2a78e0" stroke="#1a4fa8" stroke-width="0.7" opacity="1"/>
<rect x="5.2" y="6.5" width="1.6" height="3.6" fill="#fff" opacity="1"/>
<circle cx="6" cy="5.1" r="0.9" fill="#fff" opacity="1"/>
</g>
</g>
<g transform="translate(244 88)">
<path d="M2 0.5 h6.5 l3 3 v10 h-9.5 z" stroke="#7f8ea6" stroke-width="1" fill="#fbf7e6" />
<line x1="3.5" y1="4" x2="8.5" y2="4" stroke="#d8b84a" stroke-width="1" />
<line x1="3.5" y1="6.3" x2="8.5" y2="6.3" stroke="#d8b84a" stroke-width="1" />
<line x1="3.5" y1="8.6" x2="8.5" y2="8.6" stroke="#d8b84a" stroke-width="1" />
<line x1="3.5" y1="10.9" x2="8.5" y2="10.9" stroke="#d8b84a" stroke-width="1" />
<circle cx="11" cy="11.5" r="4.2" fill="#2a78e0" stroke="#1a4fa8" stroke-width="0.7" opacity="1"/>
<rect x="10.2" y="10.5" width="1.6" height="3.6" fill="#fff" opacity="1"/>
<circle cx="11" cy="9.1" r="0.9" fill="#fff" opacity="1"/>
</g>
<g opacity="0.4">
<g transform="translate(323 59)">
<path d="M2 3 h6 l3 3 v8 h-9 z" stroke="#7f8ea6" stroke-width="1" fill="#fff" />
<rect x="8" y="0.5" width="7" height="5" fill="#f3d869" stroke="#b99a2e" stroke-width="1" />
</g>
</g>
<g transform="translate(323 88)">
<path d="M5 3 h7 l3 3 v8 h-10 z" stroke="#7f8ea6" stroke-width="1" fill="#f4f6fb" />
<rect x="8.5" y="0.5" width="7" height="5" fill="#f0d259" stroke="#9b8324" stroke-width="1" />
<line x1="7.5" y1="8.5" x2="13.5" y2="8.5" stroke="#8aa6d6" stroke-width="1" />
<line x1="7.5" y1="10.8" x2="13.5" y2="10.8" stroke="#8aa6d6" stroke-width="1" />
<path d="M0 11 l5 -4.5 v2.7 h5 v3.6 h-5 v2.7 z" stroke="#1c4fa8" stroke-width="0.7" fill="#3a78d8" />
</g>
<g transform="translate(404 59)">
<rect x="0.5" y="1.5" width="12" height="10" fill="#fff" stroke="#6f86b0" stroke-width="1" />
<rect x="0.5" y="1.5" width="12" height="2.5" fill="#5c84c8" />
<rect x="2" y="5" width="7" height="5" fill="#f3d04e" stroke="#b58a1d" stroke-width="0.6" />
<circle cx="13" cy="6" r="2.2" fill="#c05ad0" />
<path d="M8.5 11.5 l2.5 2.5 l4 -4.5" stroke="#2a62c8" stroke-width="2" fill="none" />
</g>
<g transform="translate(404 88)">
<path d="M7 2 l6 -1 v9 l-6 4 z" stroke="#6a6a6a" stroke-width="0.8" fill="#e8ecf2" />
<rect x="7.5" y="1" width="5" height="4" fill="#f3d04e" stroke="#b58a1d" stroke-width="0.6" />
<path d="M0.5 8 h5 M5.5 8 l-2 -2 M5.5 8 l-2 2" stroke="#3a3ac8" stroke-width="1.4" fill="none" />
<path d="M3 4 v8" stroke="#3a3ac8" stroke-width="1.2" fill="none" />
</g>
<g transform="translate(553 59)">
<rect x="0.5" y="0.5" width="13" height="11" fill="#fff" stroke="#6f86b0" stroke-width="1" />
<rect x="0.5" y="0.5" width="13" height="2.5" fill="#5c84c8" />
<line x1="2" y1="5" x2="11" y2="5" stroke="#7a8fb8" stroke-width="1" />
<line x1="2" y1="7.2" x2="11" y2="7.2" stroke="#7a8fb8" stroke-width="1" />
<line x1="2" y1="9.4" x2="11" y2="9.4" stroke="#7a8fb8" stroke-width="1" />
<path d="M3 11 l2 2.5 l3.5 -4" stroke="#a040c0" stroke-width="1.5" fill="none" />
<rect x="9.5" y="8" width="5.5" height="7" fill="#f2c83a" stroke="#a8831a" stroke-width="0.7" rx="1.5"/>
</g>
<g transform="translate(553 88)">
<rect x="0.5" y="1.5" width="13" height="12" fill="#fff" stroke="#2f4f9f" stroke-width="1.2" />
<path d="M0.5 5.5 h13 M0.5 9.5 h13 M5 1.5 v12 M9.5 1.5 v12" stroke="#2f4f9f" stroke-width="1" fill="none" />
<path d="M11 0 l1.3 2.8 l3 0.3 l-2.2 2 l0.7 3 l-2.8 -1.6 l-2.8 1.6 l0.7 -3 l-2.2 -2 l3 -0.3 z" stroke="#b08a10" stroke-width="0.5" fill="#f8d23c" />
</g>
<g transform="translate(737 59)">
<rect x="0.5" y="0.5" width="13" height="12" fill="#fff" stroke="#6f86b0" stroke-width="1" />
<rect x="0.5" y="0.5" width="13" height="2.5" fill="#5c84c8" />
<line x1="2" y1="5" x2="6" y2="5" stroke="#9ab" stroke-width="1" />
<line x1="2" y1="7.3" x2="6" y2="7.3" stroke="#9ab" stroke-width="1" />
<circle cx="8.5" cy="8" r="3.3" fill="#e8f1fb" stroke="#7a8aa0" stroke-width="1" />
<path d="M11 10.5 l3.5 3.5" stroke="#c79a3a" stroke-width="2.2" fill="none" />
</g>
<g transform="translate(737 88)">
<path d="M0.5 3.5 h9 l3 3 v8 h-12 z" stroke="#7f8ea6" stroke-width="1" fill="#f4f6fb" />
<line x1="2" y1="8" x2="9" y2="8" stroke="#8aa6d6" stroke-width="1" />
<line x1="2" y1="10.2" x2="9" y2="10.2" stroke="#8aa6d6" stroke-width="1" />
<line x1="2" y1="12.4" x2="9" y2="12.4" stroke="#8aa6d6" stroke-width="1" />
<path d="M5 3 l5.5 -2.5 l5 2.5 l-5 2.5 z" stroke="#8f7a1c" stroke-width="0.7" fill="#e8cf58" />
</g>
<g transform="translate(4 145.5)">
<path d="M2.5 1.5 h7.5 l3 3 v10.5 h-10.5 z" stroke="#555" stroke-width="1" fill="#fff" />
</g>
<g transform="translate(27 145.5)">
<path d="M0.5 5 v9.5 h12 v-8.5 h-7 l-1.5 -2 h-3.5 z" stroke="#b58a1d" stroke-width="1" fill="#f3cf55" />
<path d="M2.5 8 h12 l-2 6.5 h-12 z" stroke="#b58a1d" stroke-width="0.8" fill="#fbe38a" />
<path d="M8 3.5 q3 -3.5 6.5 -0.5 M14.5 3 l-0.3 -2.4 M14.5 3 l-2.4 0.2" stroke="#444" stroke-width="1" fill="none" />
</g>
<path d="M48.5 152 h5 l-2.5 3 z" stroke="none" stroke-width="0" fill="#444" />
<g transform="translate(62 145.5)">
<rect x="1.5" y="1.5" width="13" height="13" fill="#9da3d6" stroke="#7d84c0" stroke-width="1" />
<rect x="4" y="1.5" width="8" height="5" fill="#dfe2f6" />
<rect x="4.5" y="9.5" width="7" height="5" fill="#7077b8" />
<rect x="6" y="10.5" width="2" height="3" fill="#dfe2f6" />
</g>
<g transform="translate(86 145.5)">
<rect x="4.5" y="1" width="7" height="5" fill="#fff" stroke="#666" stroke-width="1" />
<rect x="1" y="5.5" width="14" height="7" fill="#8d9198" stroke="#555" stroke-width="1" rx="1.5"/>
<rect x="4.5" y="10" width="7" height="5" fill="#fff" stroke="#555" stroke-width="1" />
<rect x="5.8" y="12" width="4.4" height="1.2" fill="#3a78d8" />
</g>
<path d="M107.5 152 h5 l-2.5 3 z" stroke="none" stroke-width="0" fill="#444" />
<g transform="translate(122 145.5)">
<path d="M2 1 h7 l3 3 v10.5 h-10 z" stroke="#666" stroke-width="1" fill="#fff" />
<rect x="8.5" y="8.5" width="6" height="7" fill="#fff" stroke="#444" stroke-width="1" />
<line x1="10" y1="11" x2="13" y2="11" stroke="#444" stroke-width="1" />
<line x1="10" y1="13.2" x2="13" y2="13.2" stroke="#444" stroke-width="1" />
</g>
<g transform="translate(145 145.5)">
<path d="M5 1 h7 l3 3 v9 h-10 z" stroke="#7f8ea6" stroke-width="1" fill="#f2f6fd" />
<line x1="7.5" y1="4.5" x2="13" y2="4.5" stroke="#6f9ad6" stroke-width="1" />
<line x1="7.5" y1="6.8" x2="13" y2="6.8" stroke="#6f9ad6" stroke-width="1" />
<line x1="7.5" y1="9.1" x2="13" y2="9.1" stroke="#6f9ad6" stroke-width="1" />
<path d="M0.5 11 l5 -4.5 v2.7 h5 v3.6 h-5 v2.7 z" stroke="#1c4fa8" stroke-width="0.7" fill="#2f6fd0" />
</g>
<g transform="translate(169 145.5)">
<path d="M1.5 1 h7 l3 3 v10 h-10 z" stroke="#7f8ea6" stroke-width="1" fill="#f2f6fd" />
<line x1="3.5" y1="4.5" x2="9" y2="4.5" stroke="#6f9ad6" stroke-width="1" />
<line x1="3.5" y1="6.8" x2="9" y2="6.8" stroke="#6f9ad6" stroke-width="1" />
<line x1="3.5" y1="9.1" x2="9" y2="9.1" stroke="#6f9ad6" stroke-width="1" />
<line x1="3.5" y1="11.4" x2="9" y2="11.4" stroke="#6f9ad6" stroke-width="1" />
<path d="M16 11 l-5 -4.5 v2.7 h-5 v3.6 h5 v2.7 z" stroke="#1c4fa8" stroke-width="0.7" fill="#2f6fd0" />
</g>
<g transform="translate(193 145.5)">
<path d="M5 4 h7 l3 3 v8 h-10 z" stroke="#7f8ea6" stroke-width="1" fill="#f4f6fb" />
<rect x="8.5" y="1" width="7" height="5" fill="#e8c84e" stroke="#9b8324" stroke-width="1" />
<line x1="7.5" y1="9.5" x2="13.5" y2="9.5" stroke="#8aa6d6" stroke-width="1" />
<line x1="7.5" y1="11.8" x2="13.5" y2="11.8" stroke="#8aa6d6" stroke-width="1" />
<path d="M0 11.5 l5 -4.5 v2.7 h5 v3.6 h-5 v2.7 z" stroke="#1c4fa8" stroke-width="0.7" fill="#3a78d8" />
</g>
<g transform="translate(217 145.5)">
<rect x="1" y="1.5" width="14" height="13" fill="#fff" stroke="#3a62b0" stroke-width="1.2" />
<rect x="1" y="1.5" width="14" height="2.8" fill="#3a6fd0" />
<path d="M5 8 a3.2 3.2 0 0 1 6 -0.5 M11 10 a3.2 3.2 0 0 1 -6 0.5" stroke="#6aa81c" stroke-width="1.8" fill="none" />
</g>
<g transform="translate(241 145.5)">
<circle cx="6.5" cy="6.5" r="4.8" fill="#eef4fb" stroke="#8a93a2" stroke-width="1.3" />
<path d="M10 10 l4 4" stroke="#c9a24a" stroke-width="2.6" fill="none" />
</g>
<g transform="translate(265 145.5)">
<circle cx="6.5" cy="6.5" r="4.8" fill="#eef4fb" stroke="#8a93a2" stroke-width="1.3" />
<path d="M4 6.5 h5 M6.5 4 v5" stroke="#2a56c0" stroke-width="1.8" fill="none" />
<path d="M10 10 l4 4" stroke="#c9a24a" stroke-width="2.6" fill="none" />
</g>
<g transform="translate(289 145.5)">
<path d="M3.5 8 v-3.5 q1 -1.2 2 0 v-1.5 q1 -1.2 2 0 v0.6 q1 -1.2 2 0 v1 q1 -1 2 0.2 v6 q-0.5 3.5 -3 4.5 h-3.5 q-2 -1.5 -3.5 -5 q0.8 -1.8 2 0 z" stroke="#b6b6b6" stroke-width="1" fill="#f4f4f4" />
</g>
<g transform="translate(313 145.5)">
<path d="M3 13 L13 3 M4.5 3.5 L11.5 12.5" stroke="#666" stroke-width="0.9" fill="none" stroke-dasharray="2 1"/>
<rect x="1.5" y="12" width="2" height="2" fill="#222" />
<rect x="12.5" y="2" width="2" height="2" fill="#222" />
</g>
<g transform="translate(336 145.5)">
<rect x="2.5" y="2.5" width="11" height="11" fill="#eef2f8" stroke="#333" stroke-width="1" stroke-dasharray="2 1.2"/>
<path d="M2.5 8 h11 M8 2.5 v11" stroke="#555" stroke-width="0.8" fill="none" stroke-dasharray="1.5 1"/>
<rect x="1.4" y="1.4" width="2.2" height="2.2" fill="#111" />
<rect x="1.4" y="6.9" width="2.2" height="2.2" fill="#111" />
<rect x="1.4" y="12.4" width="2.2" height="2.2" fill="#111" />
<rect x="6.9" y="1.4" width="2.2" height="2.2" fill="#111" />
<rect x="6.9" y="12.4" width="2.2" height="2.2" fill="#111" />
<rect x="12.4" y="1.4" width="2.2" height="2.2" fill="#111" />
<rect x="12.4" y="6.9" width="2.2" height="2.2" fill="#111" />
<rect x="12.4" y="12.4" width="2.2" height="2.2" fill="#111" />
</g>
<g transform="translate(361 145.5)">
<circle cx="3" cy="3" r="1.8" fill="#7db4e0" stroke="#3a78b0" stroke-width="0.9" />
<circle cx="3" cy="8" r="1.8" fill="#7db4e0" stroke="#3a78b0" stroke-width="0.9" />
<circle cx="3" cy="13" r="1.8" fill="#7db4e0" stroke="#3a78b0" stroke-width="0.9" />
<circle cx="8" cy="3" r="1.8" fill="#7db4e0" stroke="#3a78b0" stroke-width="0.9" />
<circle cx="8" cy="8" r="1.8" fill="#7db4e0" stroke="#3a78b0" stroke-width="0.9" />
<circle cx="8" cy="13" r="1.8" fill="#7db4e0" stroke="#3a78b0" stroke-width="0.9" />
<circle cx="13" cy="3" r="1.8" fill="#7db4e0" stroke="#3a78b0" stroke-width="0.9" />
<circle cx="13" cy="8" r="1.8" fill="#7db4e0" stroke="#3a78b0" stroke-width="0.9" />
<circle cx="13" cy="13" r="1.8" fill="#7db4e0" stroke="#3a78b0" stroke-width="0.9" />
</g>
<text x="380.6" y="158.7" font-size="10.5" fill="#444" textLength="20.2" lengthAdjust="spacing" >0.10</text>
<path d="M419.5 152 h5 l-2.5 3 z" stroke="none" stroke-width="0" fill="#333" />
<line x1="435.2" y1="160.6" x2="446.5" y2="148.7" stroke="#34406a" stroke-width="1.5" />
<rect x="457.5" y="148.5" width="15" height="11" fill="#e8f2fa" stroke="#333" stroke-width="1" />
<path d="M482 146.5 q12 -1 15 11" stroke="#222" stroke-width="1.2" fill="none" />
<circle cx="513" cy="153.5" r="5.8" fill="#eef3fa" stroke="#555" stroke-width="1.1" />
<text x="536" y="161" font-size="17" fill="#2a3fa8" font-weight="bold" text-anchor="middle" font-family="Liberation Serif" >A</text>
<g transform="translate(553 145.5)">
<path d="M1 9.5 L11 1.5 V14 H8.5 V9.5 Z" stroke="#2a4fc0" stroke-width="0.8" fill="#5b8ae8" />
<rect x="10.5" y="1.5" width="3" height="12.5" fill="#1f3fb0" />
</g>
<path d="M590 158 a4.5 4.5 0 1 0 -4 -6.5 M584.5 148 v4 h4" stroke="#9fb0d8" stroke-width="2.2" fill="none" />
<path d="M598.5 152 h5 l-2.5 3 z" stroke="none" stroke-width="0" fill="#c8c8c8" />
<path d="M617.5 158 a4.5 4.5 0 1 1 4 -6.5 M623 148 v4 h-4" stroke="#9fb0d8" stroke-width="2.2" fill="none" />
<path d="M633.5 152 h5 l-2.5 3 z" stroke="none" stroke-width="0" fill="#c8c8c8" />
<path d="M648.5 149.5 h11 M659.5 149.5 l-3 -2.5 M659.5 149.5 l-3 2.5 M648.5 147 v5" stroke="#222" stroke-width="1" fill="none" />
<path d="M673 157.5 h11 M684 157.5 l-3 -2.5 M684 157.5 l-3 2.5 M673 155 v5" stroke="#222" stroke-width="1" fill="none" />
<path d="M696.5 151.5 h13 M696.5 156.5 h13 M709.5 146.5 v14 M698 149 q3 3 5 0" stroke="#222" stroke-width="1.1" fill="none" />
<path d="M722.5 147 h4 v6 h4 v6" stroke="#222" stroke-width="1.1" fill="none" />
<path d="M721 145.5 h3 v3 h-3 z M729 158.5 l1.5 2.5 l1.5 -2.5 z" stroke="#d0281c" stroke-width="0.6" fill="#d0281c" />
<path d="M745 161 L756 146.5 M750 147 L753.5 159" stroke="#333" stroke-width="1" fill="none" />
<text x="755" y="150.5" font-size="6" fill="#2a3fa8" font-weight="bold" >xy</text>
<path d="M771.5 146.5 v12 l3 -3 l2.2 4.5 l1.8 -0.9 l-2.2 -4.3 h4 z" stroke="#5a6ea8" stroke-width="0.9" fill="#f4f6fc" />
<path d="M796 147 l5 9 M803 147 l-5 9" stroke="#9fb0d8" stroke-width="1.3" fill="none" />
<circle cx="796.5" cy="158" r="2" fill="none" stroke="#8fa0d0" stroke-width="1.2" />
<circle cx="802.5" cy="158" r="2" fill="none" stroke="#8fa0d0" stroke-width="1.2" />
<rect x="816.5" y="147.5" width="7" height="8" fill="#f2f5fb" stroke="#b8c4e0" stroke-width="1" />
<rect x="821.5" y="151.5" width="7" height="8" fill="#f2f5fb" stroke="#b8c4e0" stroke-width="1" />
<line x1="823" y1="154" x2="827" y2="154" stroke="#b8c4e0" stroke-width="1" />
<line x1="823" y1="156" x2="827" y2="156" stroke="#b8c4e0" stroke-width="1" />
<rect x="840.5" y="148.5" width="10" height="11" fill="#e6d2a0" stroke="#c0a868" stroke-width="1" />
<rect x="843" y="146.5" width="5" height="3" fill="#c8c8c8" stroke="#999" stroke-width="0.6" />
<rect x="847" y="153" width="7" height="7.5" fill="#fff" stroke="#999" stroke-width="0.8" />
<path d="M865 147.5 l12 12 M877 147.5 l-12 12" stroke="#f07a6a" stroke-width="2.6" fill="none" />
<path d="M888.5 148 l11 11 M899.5 148 l-11 11" stroke="#333" stroke-width="1.3" fill="none" />
<path d="M895 156 l6 5 M901 156 l-6 5" stroke="#e0241c" stroke-width="2" fill="none" />
<path d="M908 162 L923 148.5" stroke="#b03030" stroke-width="1.1" fill="none" />
<path d="M917 146 l9 8.5" stroke="#222" stroke-width="1.3" fill="none" />
<path d="M934.5 146.5 v15 M948 146.5 v15" stroke="#2a3f88" stroke-width="1.8" fill="none" />
<path d="M948 146.5 v15" stroke="#2a3f88" stroke-width="1.6" fill="none" />
<path d="M937 154 h6 l-2 -2 M943 154 l-2 2" stroke="#2a3fa8" stroke-width="1" fill="none" />
<path d="M948 146.5 v15" stroke="#e6e6e6" stroke-width="2" stroke-dasharray="0 5 2.5 7.5"/>
<path d="M971.5 146.5 v15" stroke="#2a3f88" stroke-width="1.8" fill="none" />
<path d="M958 146.5 v15" stroke="#2a3f88" stroke-width="1.8" stroke-dasharray="5 2.5"/>
<path d="M960.5 154 h6 l-2 -2 M966.5 154 l-2 2" stroke="#2a3fa8" stroke-width="1" fill="none" />
<g transform="translate(982 145.5)">
<rect x="2" y="1.5" width="13" height="11" fill="#eaf1fb" stroke="#5a7ab8" stroke-width="1" />
<rect x="2" y="1.5" width="13" height="2.6" fill="#4a78d0" />
<rect x="0.5" y="5.5" width="8" height="8" fill="#dfe8f6" stroke="#6a84b4" stroke-width="0.8" />
<rect x="6" y="7.5" width="5.5" height="7.5" fill="#f2c83a" stroke="#a8831a" stroke-width="0.7" rx="1.5"/>
</g>
<g transform="translate(1007 145.5)">
<rect x="3.5" y="1.5" width="12" height="11" fill="#c9d4e8" stroke="#5a6a8a" stroke-width="1" />
<rect x="0.5" y="4.5" width="12" height="10.5" fill="#fff" stroke="#5a6a8a" stroke-width="1" />
<path d="M2 8 l1.5 1.5 l2.5 -3 M2 12 l1.5 1.5 l2.5 -3" stroke="#2f8f2f" stroke-width="1.3" fill="none" />
<path d="M7.5 8.5 h3.5 M7.5 12.5 h3.5" stroke="#666" stroke-width="1" fill="none" />
</g>
<g transform="translate(1031 145.5)">
<path d="M3.5 1 l2.5 2.5 l-2.5 2.5 l-2.5 -2.5 z" stroke="#222" stroke-width="1" fill="none" />
<path d="M3.5 6 v6 h3" stroke="#222" stroke-width="1" fill="none" />
<rect x="7.5" y="1.5" width="7" height="6" fill="#fff" stroke="#222" stroke-width="1" />
<path d="M9 3.5 h4 M9 5.5 h4" stroke="#222" stroke-width="0.8" fill="none" />
<rect x="6.5" y="9.5" width="8" height="5" fill="#fff" stroke="#222" stroke-width="1" />
</g>
<path d="M1061.5 150 h5 M1061.5 152.5 h5 l-2.5 3 z" stroke="#999" stroke-width="1" fill="#999" />
<g transform="translate(3 996)">
<rect x="0.5" y="0.5" width="11" height="9" fill="#fff" stroke="#6f86b0" stroke-width="1" />
<rect x="0.5" y="0.5" width="11" height="2.3" fill="#5c84c8" />
<rect x="2" y="4" width="6" height="4.5" fill="#f3d04e" stroke="#b58a1d" stroke-width="0.6" />
<circle cx="12.5" cy="5.5" r="2" fill="#c05ad0" />
<path d="M8 10 l2.5 2.5 l4 -4.5" stroke="#2a62c8" stroke-width="1.8" fill="none" />
</g>
<g transform="translate(67 994)">
<path d="M7 2 l6 -1 v9 l-6 4 z" stroke="#6a6a6a" stroke-width="0.8" fill="#e8ecf2" />
<rect x="7.5" y="1" width="5" height="4" fill="#f3d04e" stroke="#b58a1d" stroke-width="0.6" />
<path d="M0.5 8 h5 M5.5 8 l-2 -2 M5.5 8 l-2 2" stroke="#3a3ac8" stroke-width="1.4" fill="none" />
<path d="M3 4 v8" stroke="#3a3ac8" stroke-width="1.2" fill="none" />
</g>
<g transform="translate(139 993)">
<rect x="0.5" y="0.5" width="13" height="11" fill="#fff" stroke="#6f86b0" stroke-width="1" />
<rect x="0.5" y="0.5" width="13" height="2.5" fill="#5c84c8" />
<line x1="2" y1="5" x2="11" y2="5" stroke="#7a8fb8" stroke-width="1" />
<line x1="2" y1="7.2" x2="11" y2="7.2" stroke="#7a8fb8" stroke-width="1" />
<line x1="2" y1="9.4" x2="11" y2="9.4" stroke="#7a8fb8" stroke-width="1" />
<path d="M3 11 l2 2.5 l3.5 -4" stroke="#a040c0" stroke-width="1.5" fill="none" />
<rect x="9.5" y="8" width="5.5" height="7" fill="#f2c83a" stroke="#a8831a" stroke-width="0.7" rx="1.5"/>
</g>
<g transform="translate(260 993)">
<rect x="0.5" y="1.5" width="13" height="12" fill="#fff" stroke="#2f4f9f" stroke-width="1.2" />
<path d="M0.5 5.5 h13 M0.5 9.5 h13 M5 1.5 v12 M9.5 1.5 v12" stroke="#2f4f9f" stroke-width="1" fill="none" />
<path d="M11 0 l1.3 2.8 l3 0.3 l-2.2 2 l0.7 3 l-2.8 -1.6 l-2.8 1.6 l0.7 -3 l-2.2 -2 l3 -0.3 z" stroke="#b08a10" stroke-width="0.5" fill="#f8d23c" />
</g>
</svg>
</body></html>
